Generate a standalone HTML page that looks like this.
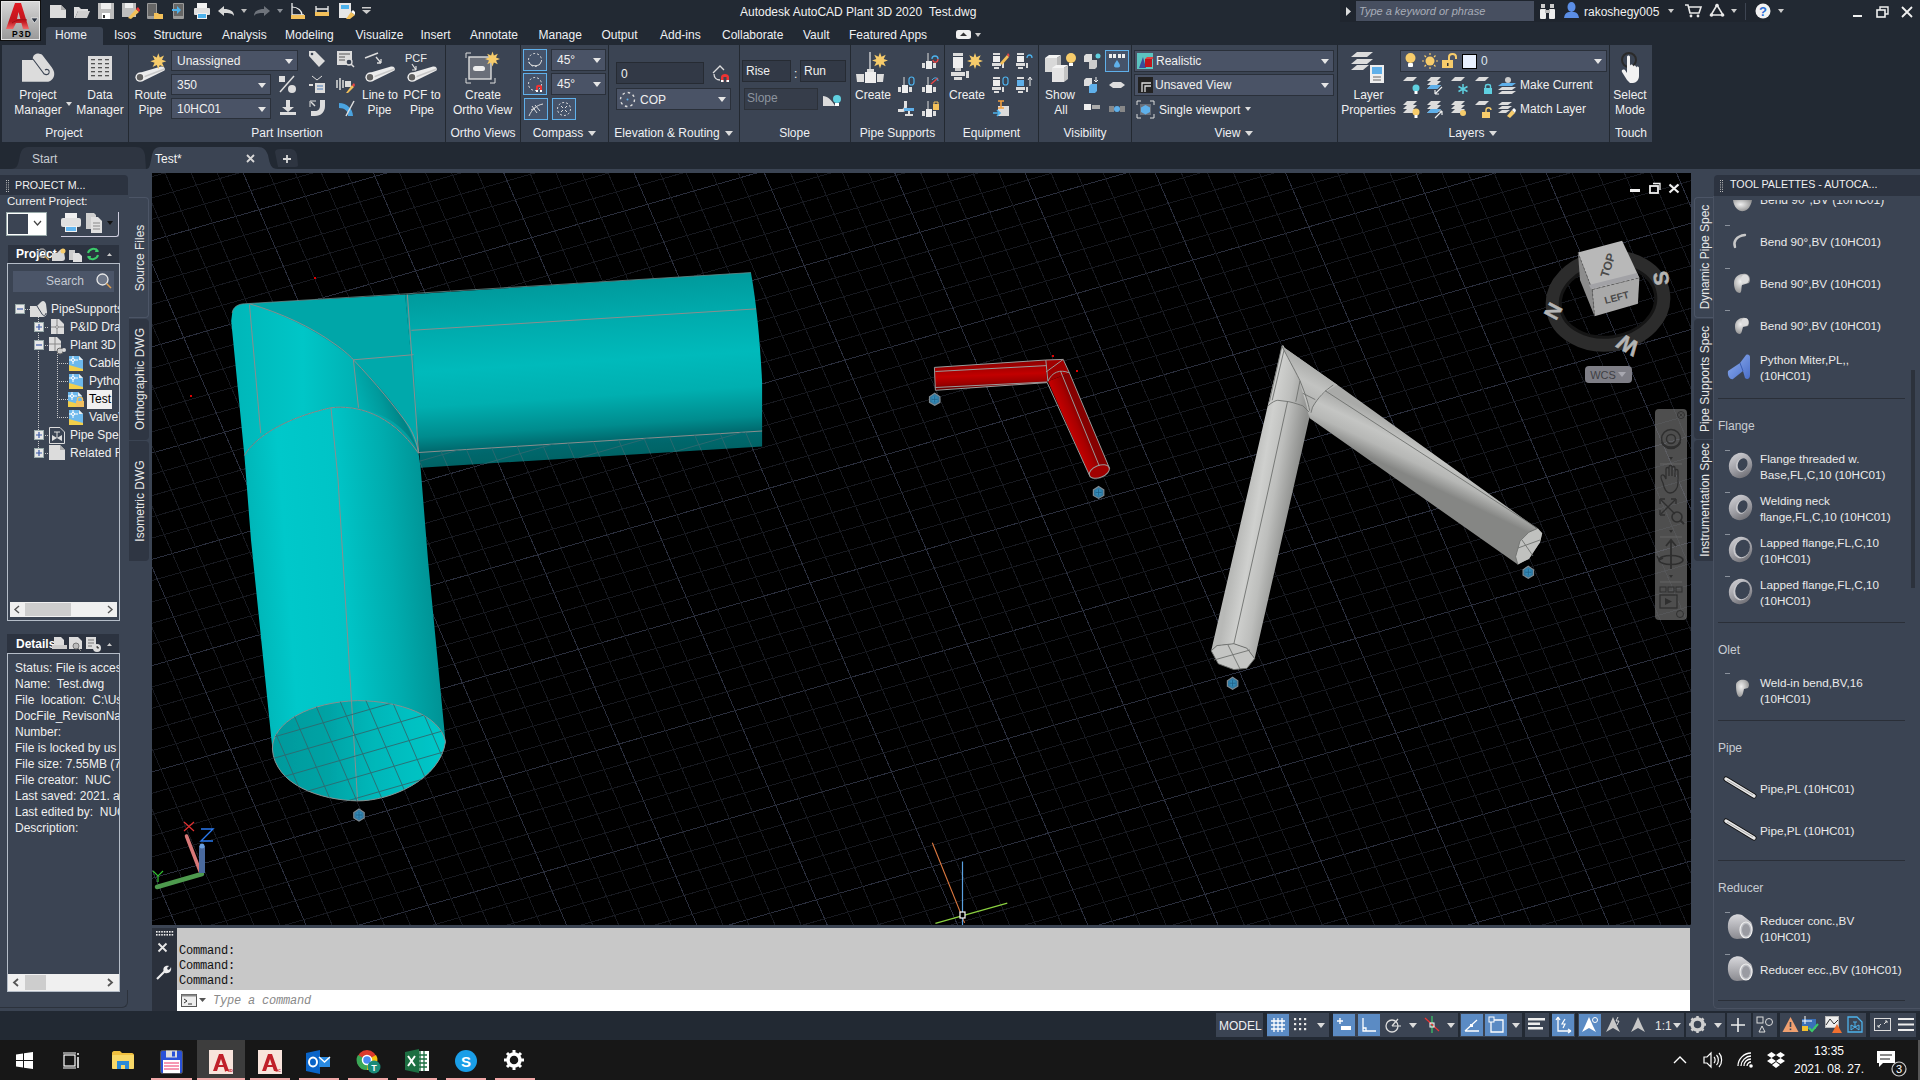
<!DOCTYPE html>
<html><head><meta charset="utf-8">
<style>
*{margin:0;padding:0;box-sizing:border-box}
html,body{width:1920px;height:1080px;overflow:hidden;background:#222933;font-family:"Liberation Sans",sans-serif;font-size:12px;color:#f0f0f0;position:relative}
.a{position:absolute}
.t{position:absolute;white-space:nowrap;line-height:1}
svg{overflow:visible}
</style></head><body>
<div class="a" style="left:0px;top:0px;width:1920px;height:45px;background:#222933;"></div>
<div class="a" style="left:1340px;top:0px;width:430px;height:22px;background:#1f252e;"></div>
<div class="a" style="left:0;top:0;width:41px;height:41px;background:#0e0e0e"></div>
<div class="a" style="left:1px;top:1px;width:39px;height:39px;border:1.5px solid #e6e6e6;background:linear-gradient(180deg,#d6d6d6,#9a9a9a)"></div>
<svg class="a" style="left:5px;top:2px;" width="26" height="28" viewBox="0 0 26 28"><defs><linearGradient id="ag" x1="0" y1="0" x2="0" y2="1"><stop offset="0" stop-color="#e21c24"/><stop offset="0.7" stop-color="#c0141c"/><stop offset="1" stop-color="#f06a6a"/></linearGradient></defs><path d="M1 27 L10 1 L16 1 L24 27 L18 27 L13.5 10 L12 17 L18 17 L17 21 L11 21 L8 27 Z" fill="url(#ag)"/><path d="M7 21 C11 18 17 17 22 18" stroke="#a01018" stroke-width="1" fill="none"/></svg>
<div class="t" style="left:12px;top:30.30px;font-size:8.5px;color:#000;font-weight:bold;font-style:normal;font-family:'Liberation Sans',sans-serif;letter-spacing:1.2px">P3D</div>
<svg class="a" style="left:31px;top:18px;" width="7" height="5" viewBox="0 0 7 5"><path d="M0 0 H7 L3.5 5Z" fill="#2a3340" stroke="#fff" stroke-width="0.6"/></svg>
<svg class="a" style="left:50px;top:5px;" width="16" height="13" viewBox="0 0 16 13"><path d="M0 0 H11 L16 5 V13 H0Z" fill="#dcdcdc"/><path d="M11 0 V5 H16" fill="#aaa"/></svg>
<svg class="a" style="left:74px;top:5px;" width="16" height="13" viewBox="0 0 16 13"><path d="M0 2 H5 L7 4 H14 V6 H4 L1 13 H0Z" fill="#dcdcdc"/><path d="M4 6 H16 L13 13 H1Z" fill="#cfcfcf"/></svg>
<svg class="a" style="left:98px;top:3px;" width="16" height="16" viewBox="0 0 16 16"><rect x="0" y="0" width="16" height="16" fill="#bdbdbd"/><rect x="3" y="0" width="10" height="6" fill="#eee"/><rect x="4" y="10" width="8" height="6" fill="#fff"/><rect x="5" y="12" width="2" height="3" fill="#333"/></svg>
<svg class="a" style="left:122px;top:3px;" width="17" height="16" viewBox="0 0 17 16"><rect x="0" y="0" width="14" height="14" fill="#bdbdbd"/><rect x="3" y="0" width="8" height="5" fill="#eee"/><path d="M6 15 L14 6 L17 9 L9 16 Z" fill="#f3c05a"/><path d="M14 6 L16 4 L18 7 L17 9Z" fill="#e33"/></svg>
<svg class="a" style="left:147px;top:3px;" width="16" height="16" viewBox="0 0 16 16"><rect x="0" y="0" width="10" height="16" rx="1" fill="#9a9a9a"/><rect x="1" y="1" width="8" height="12" fill="#666"/><path d="M7 10 H11 L12 11 H16 V16 H7Z" fill="#f3c05a"/></svg>
<svg class="a" style="left:172px;top:3px;" width="12" height="16" viewBox="0 0 12 16"><rect x="1" y="0" width="11" height="16" rx="1" fill="#9a9a9a"/><rect x="2" y="1" width="9" height="12" fill="#666"/><path d="M0 6 H5 V3 L9 7 L5 11 V8 H0Z" fill="#4db2ec"/></svg>
<svg class="a" style="left:194px;top:3px;" width="16" height="16" viewBox="0 0 16 16"><rect x="3" y="0" width="10" height="5" fill="#f2f2f2"/><rect x="0" y="5" width="16" height="7" rx="1" fill="#e0e0e0"/><rect x="3" y="10" width="10" height="6" fill="#f2f2f2"/><rect x="4" y="11" width="8" height="4" fill="#4db2ec"/></svg>
<svg class="a" style="left:218px;top:6px;" width="16" height="10" viewBox="0 0 16 10"><path d="M0 5 L6 0 V3 C12 3 16 5 16 10 C14 7 11 7 6 7 V10Z" fill="#d8d8d8"/></svg>
<svg class="a" style="left:241px;top:9px;" width="6" height="4" viewBox="0 0 6 4"><path d="M0 0H6L3 4Z" fill="#bbb"/></svg>
<svg class="a" style="left:254px;top:6px;" width="16" height="10" viewBox="0 0 16 10"><path d="M16 5 L10 0 V3 C4 3 0 5 0 10 C2 7 5 7 10 7 V10Z" fill="#6e737b"/></svg>
<svg class="a" style="left:277px;top:9px;" width="6" height="4" viewBox="0 0 6 4"><path d="M0 0H6L3 4Z" fill="#8a8f96"/></svg>
<svg class="a" style="left:291px;top:3px;" width="14" height="16" viewBox="0 0 14 16"><path d="M1 0 V12 H13" stroke="#eee" stroke-width="1.3" fill="none"/><path d="M1 4 C7 4 11 8 11 12" stroke="#eee" stroke-width="1.2" fill="none"/><rect x="0" y="12" width="14" height="4" fill="#f3c05a"/></svg>
<svg class="a" style="left:315px;top:6px;" width="14" height="10" viewBox="0 0 14 10"><path d="M1 3 H13 M1 0 V6 M13 0 V6" stroke="#eee" stroke-width="1.3"/><rect x="0" y="6" width="14" height="4" fill="#f3c05a"/></svg>
<svg class="a" style="left:339px;top:3px;" width="16" height="16" viewBox="0 0 16 16"><rect x="0" y="0" width="12" height="15" fill="#e6e6e6"/><rect x="2" y="2" width="8" height="4" fill="#4db2ec"/><path d="M7 16 L12 9 L16 12 L11 16Z" fill="#f3c05a"/><path d="M12 9 L14 7 L16 9 L16 12Z" fill="#fff"/></svg>
<svg class="a" style="left:362px;top:7px;" width="9" height="7" viewBox="0 0 9 7"><rect x="0" y="0" width="9" height="1.5" fill="#ccc"/><path d="M0 3 H9 L4.5 7Z" fill="#ccc"/></svg>
<div class="t" style="left:740px;top:5.84px;font-size:12px;color:#f2f2f2;font-weight:normal;font-style:normal;font-family:'Liberation Sans',sans-serif;">Autodesk AutoCAD Plant 3D 2020</div>
<div class="t" style="left:929px;top:5.84px;font-size:12px;color:#f2f2f2;font-weight:normal;font-style:normal;font-family:'Liberation Sans',sans-serif;">Test.dwg</div>
<svg class="a" style="left:1346px;top:7px;" width="5" height="9" viewBox="0 0 5 9"><path d="M0 0 L5 4.5 L0 9Z" fill="#ddd"/></svg>
<div class="a" style="left:1356px;top:1px;width:178px;height:20px;background:#474f60;"></div>
<div class="t" style="left:1359px;top:5.69px;font-size:11px;color:#a7adb8;font-weight:normal;font-style:italic;font-family:'Liberation Sans',sans-serif;">Type a keyword or phrase</div>
<svg class="a" style="left:1540px;top:4px;" width="15" height="15" viewBox="0 0 15 15"><rect x="1" y="0" width="4" height="4" fill="#ccc"/><rect x="10" y="0" width="4" height="4" fill="#ccc"/><rect x="0" y="5" width="6" height="10" rx="1" fill="#eee"/><rect x="9" y="5" width="6" height="10" rx="1" fill="#eee"/><rect x="5" y="6" width="5" height="3" fill="#bbb"/></svg>
<svg class="a" style="left:1564px;top:2px;" width="15" height="16" viewBox="0 0 15 16"><ellipse cx="7.5" cy="5" rx="4" ry="5" fill="#5b8ee6"/><path d="M0 16 C1 10 4 10 7.5 10 C11 10 14 10 15 16Z" fill="#5b8ee6"/></svg>
<div class="t" style="left:1584px;top:5.84px;font-size:12px;color:#f0f0f0;font-weight:normal;font-style:normal;font-family:'Liberation Sans',sans-serif;">rakoshegy005</div>
<svg class="a" style="left:1668px;top:9px;" width="6" height="4" viewBox="0 0 6 4"><path d="M0 0H6L3 4Z" fill="#ccc"/></svg>
<svg class="a" style="left:1685px;top:4px;" width="16" height="13" viewBox="0 0 16 13"><path d="M0 1 H3 L5 9 H14 L16 3 H4" stroke="#e8e8e8" stroke-width="1.6" fill="none"/><circle cx="6" cy="12" r="1.4" fill="#e8e8e8"/><circle cx="13" cy="12" r="1.4" fill="#e8e8e8"/></svg>
<svg class="a" style="left:1709px;top:3px;" width="16" height="14" viewBox="0 0 16 14"><path d="M8 2 L2 12 H14Z" stroke="#e8e8e8" stroke-width="1.6" fill="none"/><circle cx="8" cy="2.5" r="1.8" fill="#e8e8e8"/><circle cx="2.5" cy="12" r="1.8" fill="#e8e8e8"/><circle cx="13.5" cy="12" r="1.8" fill="#e8e8e8"/></svg>
<svg class="a" style="left:1731px;top:9px;" width="6" height="4" viewBox="0 0 6 4"><path d="M0 0H6L3 4Z" fill="#ccc"/></svg>
<div class="a" style="left:1745px;top:3px;width:1px;height:17px;background:#3e4552;"></div>
<svg class="a" style="left:1755px;top:3px;" width="16" height="16" viewBox="0 0 16 16"><circle cx="8" cy="8" r="7.5" fill="#f2f2f2"/><text x="8" y="13" font-family="Liberation Sans" font-weight="bold" font-size="13" text-anchor="middle" fill="#2d6fd6">?</text></svg>
<svg class="a" style="left:1778px;top:9px;" width="6" height="4" viewBox="0 0 6 4"><path d="M0 0H6L3 4Z" fill="#ccc"/></svg>
<div class="a" style="left:1853px;top:15px;width:9px;height:2px;background:#f0f0f0;"></div>
<svg class="a" style="left:1876px;top:6px;" width="13" height="12" viewBox="0 0 13 12"><rect x="1" y="4" width="8" height="7" fill="none" stroke="#f0f0f0" stroke-width="1.6"/><path d="M4 4 V1 H12 V8 H9" fill="none" stroke="#f0f0f0" stroke-width="1.4"/></svg>
<svg class="a" style="left:1901px;top:6px;" width="12" height="12" viewBox="0 0 12 12"><path d="M1 1 L11 11 M11 1 L1 11" stroke="#f0f0f0" stroke-width="1.8"/></svg>
<div class="a" style="left:46px;top:27px;width:57px;height:18px;background:#3b4453;border-radius:3px 3px 0 0"></div>
<div class="t" style="left:55px;top:28.84px;font-size:12px;color:#eef0f3;font-weight:normal;font-style:normal;font-family:'Liberation Sans',sans-serif;">Home</div>
<div class="t" style="left:114px;top:28.84px;font-size:12px;color:#eef0f3;font-weight:normal;font-style:normal;font-family:'Liberation Sans',sans-serif;">Isos</div>
<div class="t" style="left:153.5px;top:28.84px;font-size:12px;color:#eef0f3;font-weight:normal;font-style:normal;font-family:'Liberation Sans',sans-serif;">Structure</div>
<div class="t" style="left:222px;top:28.84px;font-size:12px;color:#eef0f3;font-weight:normal;font-style:normal;font-family:'Liberation Sans',sans-serif;">Analysis</div>
<div class="t" style="left:285px;top:28.84px;font-size:12px;color:#eef0f3;font-weight:normal;font-style:normal;font-family:'Liberation Sans',sans-serif;">Modeling</div>
<div class="t" style="left:355.5px;top:28.84px;font-size:12px;color:#eef0f3;font-weight:normal;font-style:normal;font-family:'Liberation Sans',sans-serif;">Visualize</div>
<div class="t" style="left:420.5px;top:28.84px;font-size:12px;color:#eef0f3;font-weight:normal;font-style:normal;font-family:'Liberation Sans',sans-serif;">Insert</div>
<div class="t" style="left:470px;top:28.84px;font-size:12px;color:#eef0f3;font-weight:normal;font-style:normal;font-family:'Liberation Sans',sans-serif;">Annotate</div>
<div class="t" style="left:538.5px;top:28.84px;font-size:12px;color:#eef0f3;font-weight:normal;font-style:normal;font-family:'Liberation Sans',sans-serif;">Manage</div>
<div class="t" style="left:601.5px;top:28.84px;font-size:12px;color:#eef0f3;font-weight:normal;font-style:normal;font-family:'Liberation Sans',sans-serif;">Output</div>
<div class="t" style="left:660px;top:28.84px;font-size:12px;color:#eef0f3;font-weight:normal;font-style:normal;font-family:'Liberation Sans',sans-serif;">Add-ins</div>
<div class="t" style="left:722px;top:28.84px;font-size:12px;color:#eef0f3;font-weight:normal;font-style:normal;font-family:'Liberation Sans',sans-serif;">Collaborate</div>
<div class="t" style="left:803px;top:28.84px;font-size:12px;color:#eef0f3;font-weight:normal;font-style:normal;font-family:'Liberation Sans',sans-serif;">Vault</div>
<div class="t" style="left:849px;top:28.84px;font-size:12px;color:#eef0f3;font-weight:normal;font-style:normal;font-family:'Liberation Sans',sans-serif;">Featured Apps</div>
<svg class="a" style="left:956px;top:30px;" width="15" height="9" viewBox="0 0 15 9"><rect x="0" y="0" width="15" height="9" rx="2.5" fill="#f0f0f0"/><path d="M4 6 L7.5 2.5 L11 6Z" fill="#333"/></svg>
<svg class="a" style="left:975px;top:33px;" width="6" height="4" viewBox="0 0 6 4"><path d="M0 0H6L3 4Z" fill="#ccc"/></svg>
<div class="a" style="left:2px;top:45px;width:1650px;height:97px;background:#3b4453;"></div>
<div class="a" style="left:128px;top:45px;width:1px;height:97px;background:#232931;"></div>
<div class="a" style="left:445px;top:45px;width:1px;height:97px;background:#232931;"></div>
<div class="a" style="left:520px;top:45px;width:1px;height:97px;background:#232931;"></div>
<div class="a" style="left:608px;top:45px;width:1px;height:97px;background:#232931;"></div>
<div class="a" style="left:739px;top:45px;width:1px;height:97px;background:#232931;"></div>
<div class="a" style="left:850px;top:45px;width:1px;height:97px;background:#232931;"></div>
<div class="a" style="left:944px;top:45px;width:1px;height:97px;background:#232931;"></div>
<div class="a" style="left:1038px;top:45px;width:1px;height:97px;background:#232931;"></div>
<div class="a" style="left:1131px;top:45px;width:1px;height:97px;background:#232931;"></div>
<div class="a" style="left:1337px;top:45px;width:1px;height:97px;background:#232931;"></div>
<div class="a" style="left:1609px;top:45px;width:1px;height:97px;background:#232931;"></div>
<div class="t" style="left:-86px;width:300px;text-align:center;top:126.84px;font-size:12px;color:#eef0f3;font-weight:normal;">Project</div>
<div class="t" style="left:137px;width:300px;text-align:center;top:126.84px;font-size:12px;color:#eef0f3;font-weight:normal;">Part Insertion</div>
<div class="t" style="left:333px;width:300px;text-align:center;top:126.84px;font-size:12px;color:#eef0f3;font-weight:normal;">Ortho Views</div>
<div class="t" style="left:408px;width:300px;text-align:center;top:126.84px;font-size:12px;color:#eef0f3;font-weight:normal;">Compass</div>
<div class="t" style="left:517px;width:300px;text-align:center;top:126.84px;font-size:12px;color:#eef0f3;font-weight:normal;">Elevation &amp; Routing</div>
<div class="t" style="left:644.5px;width:300px;text-align:center;top:126.84px;font-size:12px;color:#eef0f3;font-weight:normal;">Slope</div>
<div class="t" style="left:747.5px;width:300px;text-align:center;top:126.84px;font-size:12px;color:#eef0f3;font-weight:normal;">Pipe Supports</div>
<div class="t" style="left:841.5px;width:300px;text-align:center;top:126.84px;font-size:12px;color:#eef0f3;font-weight:normal;">Equipment</div>
<div class="t" style="left:935px;width:300px;text-align:center;top:126.84px;font-size:12px;color:#eef0f3;font-weight:normal;">Visibility</div>
<div class="t" style="left:1077.5px;width:300px;text-align:center;top:126.84px;font-size:12px;color:#eef0f3;font-weight:normal;">View</div>
<div class="t" style="left:1316.5px;width:300px;text-align:center;top:126.84px;font-size:12px;color:#eef0f3;font-weight:normal;">Layers</div>
<div class="t" style="left:1481px;width:300px;text-align:center;top:126.84px;font-size:12px;color:#eef0f3;font-weight:normal;">Touch</div>
<svg class="a" style="left:588px;top:131px;" width="8" height="5" viewBox="0 0 8 5"><path d="M0 0H8L4 5Z" fill="#dcdcdc"/></svg>
<svg class="a" style="left:725px;top:131px;" width="8" height="5" viewBox="0 0 8 5"><path d="M0 0H8L4 5Z" fill="#dcdcdc"/></svg>
<svg class="a" style="left:1245px;top:131px;" width="8" height="5" viewBox="0 0 8 5"><path d="M0 0H8L4 5Z" fill="#dcdcdc"/></svg>
<svg class="a" style="left:1489px;top:131px;" width="8" height="5" viewBox="0 0 8 5"><path d="M0 0H8L4 5Z" fill="#dcdcdc"/></svg>
<svg class="a" style="left:22px;top:53px;" width="34" height="30" viewBox="0 0 34 30"><path d="M0 7.1 H10.9 L10.9 4.2 C12 1 15 0 17.2 0.8 C19 1 20 1.5 20.5 2.2 L29.7 14.2 C31.5 17 32.5 19 32.2 21.7 C32 25 29 28.75 24.7 28.75 H0 Z" fill="#dcdcdc"/><path d="M10.9 6 L21 19.5 C22 22 26 22.5 27 20 C28 17 25 15.5 23 17" stroke="#3b4453" stroke-width="1.1" fill="none"/></svg>
<div class="t" style="left:-112px;width:300px;text-align:center;top:88.84px;font-size:12px;color:#f0f0f0;font-weight:normal;">Project</div>
<div class="t" style="left:-112px;width:300px;text-align:center;top:103.84px;font-size:12px;color:#f0f0f0;font-weight:normal;">Manager</div>
<svg class="a" style="left:66px;top:102px;" width="6" height="4" viewBox="0 0 6 4"><path d="M0 0H6L3 4Z" fill="#ddd"/></svg>
<svg class="a" style="left:88px;top:56px;" width="24" height="24" viewBox="0 0 24 24"><rect x="0" y="0" width="24" height="24" fill="#dcdcdc"/><rect x="3" y="3" width="4" height="1.3" fill="#555"/><rect x="3" y="7" width="4" height="1.3" fill="#555"/><rect x="3" y="11" width="4" height="1.3" fill="#555"/><rect x="3" y="15" width="4" height="1.3" fill="#555"/><rect x="3" y="19" width="4" height="1.3" fill="#555"/><rect x="10" y="3" width="4" height="1.3" fill="#555"/><rect x="10" y="7" width="4" height="1.3" fill="#555"/><rect x="10" y="11" width="4" height="1.3" fill="#555"/><rect x="10" y="15" width="4" height="1.3" fill="#555"/><rect x="10" y="19" width="4" height="1.3" fill="#555"/><rect x="17" y="3" width="4" height="1.3" fill="#555"/><rect x="17" y="7" width="4" height="1.3" fill="#555"/><rect x="17" y="11" width="4" height="1.3" fill="#555"/><rect x="17" y="15" width="4" height="1.3" fill="#555"/><rect x="17" y="19" width="4" height="1.3" fill="#555"/></svg>
<div class="t" style="left:-50px;width:300px;text-align:center;top:88.84px;font-size:12px;color:#f0f0f0;font-weight:normal;">Data</div>
<div class="t" style="left:-50px;width:300px;text-align:center;top:103.84px;font-size:12px;color:#f0f0f0;font-weight:normal;">Manager</div>
<svg class="a" style="left:135px;top:53px;" width="32" height="30" viewBox="0 0 32 30"><path d="M4 20 L26 13.5 C29 13 30.5 15 29.5 17.5 L7 28.5 Z" fill="#ececec"/><path d="M6 25 L29.5 16" stroke="#c8c8c8" stroke-width="1.5"/><circle cx="5" cy="24.2" r="4.6" fill="#f2f2f2"/><circle cx="5" cy="24.2" r="3.2" fill="#606060"/><path d="M23.3 0.3 L24.8 4.6 L29.0 2.6 L27.0 6.8 L31.3 8.3 L27.0 9.8 L29.0 14.0 L24.8 12.0 L23.3 16.3 L21.8 12.0 L17.6 14.0 L19.6 9.8 L15.3 8.3 L19.6 6.8 L17.6 2.6 L21.8 4.6Z" fill="#f7cc6b"/></svg>
<div class="t" style="left:0.5px;width:300px;text-align:center;top:88.84px;font-size:12px;color:#f0f0f0;font-weight:normal;">Route</div>
<div class="t" style="left:0.5px;width:300px;text-align:center;top:103.84px;font-size:12px;color:#f0f0f0;font-weight:normal;">Pipe</div>
<div class="a" style="left:171px;top:50px;width:127px;height:21px;background:#4a5366;border:1px solid #2a303a"></div>
<div class="t" style="left:177px;top:54.84px;font-size:12px;color:#f0f0f0;font-weight:normal;font-style:normal;font-family:'Liberation Sans',sans-serif;">Unassigned</div>
<svg class="a" style="left:285px;top:58.5px;" width="8" height="5" viewBox="0 0 8 5"><path d="M0 0H8L4 5Z" fill="#e6e6e6"/></svg>
<div class="a" style="left:171px;top:74px;width:100px;height:21px;background:#4a5366;border:1px solid #2a303a"></div>
<div class="t" style="left:177px;top:78.84px;font-size:12px;color:#f0f0f0;font-weight:normal;font-style:normal;font-family:'Liberation Sans',sans-serif;">350</div>
<svg class="a" style="left:258px;top:82.5px;" width="8" height="5" viewBox="0 0 8 5"><path d="M0 0H8L4 5Z" fill="#e6e6e6"/></svg>
<div class="a" style="left:171px;top:98px;width:100px;height:21px;background:#4a5366;border:1px solid #2a303a"></div>
<div class="t" style="left:177px;top:102.84px;font-size:12px;color:#f0f0f0;font-weight:normal;font-style:normal;font-family:'Liberation Sans',sans-serif;">10HC01</div>
<svg class="a" style="left:258px;top:106.5px;" width="8" height="5" viewBox="0 0 8 5"><path d="M0 0H8L4 5Z" fill="#e6e6e6"/></svg>
<svg class="a" style="left:279px;top:76px;" width="17" height="17" viewBox="0 0 17 17"><rect x="0" y="0" width="6" height="6" fill="#ddd"/><path d="M15 0 L1 16" stroke="#ddd" stroke-width="1.5"/><circle cx="13" cy="13" r="4" fill="#ddd"/></svg>
<svg class="a" style="left:280px;top:100px;" width="16" height="15" viewBox="0 0 16 15"><path d="M6 0 H10 V7 H14 L8 12 L2 7 H6Z" fill="#ddd"/><rect x="0" y="12" width="16" height="3" fill="#ddd"/></svg>
<svg class="a" style="left:309px;top:51px;" width="16" height="16" viewBox="0 0 16 16"><path d="M0 5 V0 H6 L16 10 L10 16Z" fill="#dcdcdc"/><circle cx="3" cy="3" r="1.3" fill="#3b4453"/></svg>
<svg class="a" style="left:309px;top:76px;" width="16" height="17" viewBox="0 0 16 17"><path d="M3 0 L8 4 L13 0" stroke="#ddd" fill="none"/><rect x="6" y="7" width="10" height="10" fill="#dcdcdc"/><path d="M8 10 H14 M8 13 H14" stroke="#4a7ab8"/><path d="M0 9 L4 9" stroke="#ddd" stroke-width="2"/></svg>
<svg class="a" style="left:309px;top:100px;" width="16" height="16" viewBox="0 0 16 16"><path d="M2 2 L6 6" stroke="#ddd" stroke-width="1.4"/><path d="M1 7 V1 H7" stroke="#ddd" fill="none"/><path d="M16 0 V6 C16 12 12 16 6 16 H2 V11 H6 C9 11 11 9 11 6 V0Z" fill="#dcdcdc"/></svg>
<svg class="a" style="left:337px;top:51px;" width="17" height="17" viewBox="0 0 17 17"><rect x="0" y="0" width="15" height="14" fill="#dcdcdc"/><path d="M2 3H13M2 6H8M2 9H8" stroke="#555"/><circle cx="12" cy="11" r="3" fill="#3b4453" stroke="#ddd" stroke-width="1.3"/><path d="M14 13 L17 16" stroke="#ddd" stroke-width="1.5"/></svg>
<svg class="a" style="left:337px;top:76px;" width="17" height="17" viewBox="0 0 17 17"><path d="M0 4 V12 M3 2 V14 M6 4 V12" stroke="#ddd" stroke-width="1.5"/><rect x="8" y="5" width="6" height="6" fill="#ddd"/><path d="M9 17 L15 9 L17 11 L11 17Z" fill="#f3c05a"/><path d="M15 9 L17 7 L18 9 L17 11Z" fill="#e44"/></svg>
<svg class="a" style="left:339px;top:101px;" width="16" height="15" viewBox="0 0 16 15"><path d="M0 2 C8 2 14 8 14 15 H9 C9 10 6 7 0 7Z" fill="#4aa3df"/><path d="M7 15 L15 0" stroke="#ddd" stroke-width="1.5"/></svg>
<svg class="a" style="left:365px;top:53px;" width="30" height="30" viewBox="0 0 30 30"><path d="M0 5 L13 0" stroke="#ddd" stroke-width="1.5"/><path d="M11 4 L16 10 M16 10 L16 6 M16 10 L12 10" stroke="#ddd" stroke-width="1.3" fill="none"/><path d="M4 20 L26 13.5 C29 13 30.5 15 29.5 17.5 L7 28.5 Z" fill="#ececec"/><path d="M6 25 L29.5 16" stroke="#c8c8c8" stroke-width="1.5"/><circle cx="5" cy="24.2" r="4.6" fill="#f2f2f2"/><circle cx="5" cy="24.2" r="3.2" fill="#606060"/></svg>
<div class="t" style="left:230px;width:300px;text-align:center;top:88.84px;font-size:12px;color:#f0f0f0;font-weight:normal;">Line to</div>
<div class="t" style="left:229.5px;width:300px;text-align:center;top:103.84px;font-size:12px;color:#f0f0f0;font-weight:normal;">Pipe</div>
<svg class="a" style="left:405px;top:53px;" width="34" height="30" viewBox="0 0 34 30"><text x="0" y="9" font-family="Liberation Sans" font-size="11" fill="#eee">PCF</text><path d="M7 11 L11 17 M11 17 V13 M11 17 H7" stroke="#ddd" stroke-width="1.2" fill="none"/><g transform="translate(2 0)"><path d="M4 20 L26 13.5 C29 13 30.5 15 29.5 17.5 L7 28.5 Z" fill="#ececec"/><path d="M6 25 L29.5 16" stroke="#c8c8c8" stroke-width="1.5"/><circle cx="5" cy="24.2" r="4.6" fill="#f2f2f2"/><circle cx="5" cy="24.2" r="3.2" fill="#606060"/></g></svg>
<div class="t" style="left:272px;width:300px;text-align:center;top:88.84px;font-size:12px;color:#f0f0f0;font-weight:normal;">PCF to</div>
<div class="t" style="left:272px;width:300px;text-align:center;top:103.84px;font-size:12px;color:#f0f0f0;font-weight:normal;">Pipe</div>
<svg class="a" style="left:465px;top:52px;" width="35" height="32" viewBox="0 0 35 32"><path d="M1 6 V1 H6 M1 26 V31 H6 M25 31 H30 V26" stroke="#ddd" fill="none"/><rect x="4" y="5" width="22" height="22" fill="#6a6f79" stroke="#ddd" stroke-width="1.4"/><rect x="8" y="14" width="12" height="5" rx="2.5" fill="#eee"/><path d="M27.5 -0.5 L28.9 3.5 L32.8 1.7 L31.0 5.6 L35.0 7.0 L31.0 8.4 L32.8 12.3 L28.9 10.5 L27.5 14.5 L26.1 10.5 L22.2 12.3 L24.0 8.4 L20.0 7.0 L24.0 5.6 L22.2 1.7 L26.1 3.5Z" fill="#f7cc6b"/></svg>
<div class="t" style="left:333px;width:300px;text-align:center;top:88.84px;font-size:12px;color:#f0f0f0;font-weight:normal;">Create</div>
<div class="t" style="left:332.5px;width:300px;text-align:center;top:103.84px;font-size:12px;color:#f0f0f0;font-weight:normal;">Ortho View</div>
<div class="a" style="left:523px;top:49px;width:24px;height:22px;background:#45536a;border:1px solid #5fb0ea"></div>
<svg class="a" style="left:526px;top:52px;" width="18" height="16" viewBox="0 0 18 16"><circle cx="9" cy="8" r="6.5" stroke="#ddd" stroke-dasharray="2 2" fill="none"/><path d="M3 10 C4 15 14 15 15 10" stroke="#ddd" fill="none"/></svg>
<div class="a" style="left:523px;top:73px;width:24px;height:22px;background:#45536a;border:1px solid #5fb0ea"></div>
<svg class="a" style="left:526px;top:76px;" width="18" height="16" viewBox="0 0 18 16"><circle cx="9" cy="8" r="6.5" stroke="#ddd" stroke-dasharray="2 2" fill="none"/><path d="M10 16 V11 C10 8 16 8 16 11 V16 H14 V11 H12 V16Z" fill="#e33"/><rect x="10" y="14" width="2" height="2" fill="#fff"/><rect x="14" y="14" width="2" height="2" fill="#fff"/></svg>
<div class="a" style="left:524px;top:98px;width:24px;height:22px;background:#45536a;border:1px solid #5fb0ea"></div>
<svg class="a" style="left:527px;top:101px;" width="18" height="16" viewBox="0 0 18 16"><path d="M2 15 C5 8 10 4 16 3 M5 5 L10 12 M8 4 L13 10 M4 9 L8 7" stroke="#ddd" fill="none"/></svg>
<div class="a" style="left:552px;top:98px;width:24px;height:22px;background:#45536a;border:1px solid #5fb0ea"></div>
<svg class="a" style="left:555px;top:101px;" width="18" height="16" viewBox="0 0 18 16"><circle cx="9" cy="8" r="6.5" stroke="#ddd" stroke-dasharray="2 2" fill="none"/><path d="M6 5 L8 7 M12 5 L10 7 M6 11 L8 9 M12 11 L10 9" stroke="#ddd"/></svg>
<div class="a" style="left:551px;top:49px;width:55px;height:22px;background:#4a5366;border:1px solid #2a303a"></div>
<div class="t" style="left:557px;top:54.34px;font-size:12px;color:#f0f0f0;font-weight:normal;font-style:normal;font-family:'Liberation Sans',sans-serif;">45°</div>
<svg class="a" style="left:593px;top:58.0px;" width="8" height="5" viewBox="0 0 8 5"><path d="M0 0H8L4 5Z" fill="#e6e6e6"/></svg>
<div class="a" style="left:551px;top:73px;width:55px;height:22px;background:#4a5366;border:1px solid #2a303a"></div>
<div class="t" style="left:557px;top:78.34px;font-size:12px;color:#f0f0f0;font-weight:normal;font-style:normal;font-family:'Liberation Sans',sans-serif;">45°</div>
<svg class="a" style="left:593px;top:82.0px;" width="8" height="5" viewBox="0 0 8 5"><path d="M0 0H8L4 5Z" fill="#e6e6e6"/></svg>
<div class="a" style="left:616px;top:62px;width:88px;height:22px;background:#323946;border:1px solid #262b33"></div>
<div class="t" style="left:621px;top:67.84px;font-size:12px;color:#f0f0f0;font-weight:normal;font-style:normal;font-family:'Liberation Sans',sans-serif;">0</div>
<svg class="a" style="left:712px;top:65px;" width="18" height="17" viewBox="0 0 18 17"><path d="M1 8 L8 1 L12 5" stroke="#ddd" stroke-width="1.3" fill="none"/><path d="M2 9 C2 13 5 15 8 15" stroke="#ddd" stroke-width="1.3" fill="none"/><path d="M9 17 V12 C9 8 17 8 17 12 V17 H14.5 V12 H11.5 V17Z" fill="#e33"/><rect x="9" y="15" width="2.5" height="2" fill="#fff"/><rect x="14.5" y="15" width="2.5" height="2" fill="#fff"/></svg>
<div class="a" style="left:616px;top:88px;width:115px;height:22px;background:#4a5366;border:1px solid #2a303a"></div>
<svg class="a" style="left:718px;top:97.0px;" width="8" height="5" viewBox="0 0 8 5"><path d="M0 0H8L4 5Z" fill="#e6e6e6"/></svg>
<svg class="a" style="left:619px;top:91px;" width="17" height="17" viewBox="0 0 17 17"><circle cx="8.5" cy="8.5" r="7" stroke="#ddd" stroke-width="1.4" stroke-dasharray="2.5 3" fill="none"/><circle cx="8.5" cy="8.5" r="1" fill="#5fb0ea"/></svg>
<div class="t" style="left:640px;top:93.84px;font-size:12px;color:#f0f0f0;font-weight:normal;font-style:normal;font-family:'Liberation Sans',sans-serif;">COP</div>
<div class="a" style="left:742px;top:60px;width:49px;height:22px;background:#323946;border:1px solid #262b33"></div>
<div class="t" style="left:746px;top:64.84px;font-size:12px;color:#f0f0f0;font-weight:normal;font-style:normal;font-family:'Liberation Sans',sans-serif;">Rise</div>
<div class="t" style="left:794px;top:67.84px;font-size:12px;color:#f0f0f0;font-weight:normal;font-style:normal;font-family:'Liberation Sans',sans-serif;">:</div>
<div class="a" style="left:800px;top:60px;width:46px;height:22px;background:#323946;border:1px solid #262b33"></div>
<div class="t" style="left:804px;top:64.84px;font-size:12px;color:#f0f0f0;font-weight:normal;font-style:normal;font-family:'Liberation Sans',sans-serif;">Run</div>
<div class="a" style="left:744px;top:88px;width:74px;height:22px;background:#363d4a;border:1px solid #2c3139"></div>
<div class="t" style="left:747px;top:91.84px;font-size:12px;color:#8c939e;font-weight:normal;font-style:normal;font-family:'Liberation Sans',sans-serif;">Slope</div>
<svg class="a" style="left:823px;top:94px;" width="18" height="13" viewBox="0 0 18 13"><path d="M0 2 C4 2 9 6 12 12 H0Z" fill="#dcdcdc"/><circle cx="14" cy="5" r="4" fill="#5fd0e0"/><rect x="12" y="9" width="4" height="3" fill="#fff"/></svg>
<svg class="a" style="left:856px;top:52px;" width="32" height="31" viewBox="0 0 32 31"><path d="M14 0 V17" stroke="#ddd" stroke-width="1.3"/><path d="M24.0 0.5 L25.5 4.8 L29.7 2.8 L27.7 7.0 L32.0 8.5 L27.7 10.0 L29.7 14.2 L25.5 12.2 L24.0 16.5 L22.5 12.2 L18.3 14.2 L20.3 10.0 L16.0 8.5 L20.3 7.0 L18.3 2.8 L22.5 4.8Z" fill="#f7cc6b"/><rect x="11" y="17" width="7" height="3" fill="#ddd"/><rect x="9" y="20" width="11" height="11" fill="#eee"/><path d="M0 22 H8 V30 H1Z" fill="#ddd"/><path d="M21 22 H28 L27 30 H21Z" fill="#ddd"/></svg>
<div class="t" style="left:723px;width:300px;text-align:center;top:88.84px;font-size:12px;color:#f0f0f0;font-weight:normal;">Create</div>
<svg class="a" style="left:922px;top:53px;" width="17" height="17" viewBox="0 0 17 17"><path d="M6 0 V8" stroke="#ddd"/><rect x="4" y="8" width="6" height="8" fill="#eee"/><rect x="0" y="10" width="3" height="5" fill="#ddd"/><rect x="11" y="10" width="3" height="5" fill="#ddd"/><path d="M10 6 C10 2 16 2 16 6" stroke="#4db2ec" stroke-width="1.3" fill="none"/><path d="M16 6 C16 10 11 10 11 7" stroke="#e44" stroke-width="1.3" fill="none"/></svg>
<svg class="a" style="left:898px;top:77px;" width="17" height="17" viewBox="0 0 17 17"><path d="M6 0 V8" stroke="#ddd"/><rect x="4" y="8" width="6" height="8" fill="#eee"/><rect x="0" y="10" width="3" height="5" fill="#ddd"/><rect x="11" y="10" width="3" height="5" fill="#ddd"/><rect x="11" y="0" width="5" height="8" rx="2.5" stroke="#4db2ec" stroke-width="1.2" fill="none"/></svg>
<svg class="a" style="left:922px;top:77px;" width="17" height="17" viewBox="0 0 17 17"><path d="M6 0 V8" stroke="#ddd"/><rect x="4" y="8" width="6" height="8" fill="#eee"/><rect x="0" y="10" width="3" height="5" fill="#ddd"/><rect x="11" y="10" width="3" height="5" fill="#ddd"/><path d="M9 7 L16 1" stroke="#e44" stroke-width="1.3"/><path d="M10 3 C12 0 16 0 16 4" stroke="#4db2ec" fill="none"/></svg>
<svg class="a" style="left:898px;top:101px;" width="16" height="15" viewBox="0 0 16 15"><path d="M0 8 H4 C6 8 6 6 6 4 V0 H9 V5 C9 9 7 11 4 11 H0Z" fill="#e0e0e0"/><rect x="6" y="7" width="10" height="3" fill="#5fb0ea"/><rect x="10" y="10" width="2" height="3" fill="#ddd"/><rect x="7" y="13" width="8" height="2" fill="#ddd"/></svg>
<svg class="a" style="left:922px;top:101px;" width="17" height="17" viewBox="0 0 17 17"><path d="M6 0 V8" stroke="#ddd"/><rect x="4" y="8" width="6" height="8" fill="#eee"/><rect x="0" y="10" width="3" height="5" fill="#ddd"/><rect x="11" y="10" width="3" height="5" fill="#ddd"/><rect x="11" y="3" width="6" height="6" fill="#f3c05a"/><path d="M12 3 V1 H16 V3" stroke="#f3c05a" fill="none"/></svg>
<svg class="a" style="left:951px;top:53px;" width="32" height="30" viewBox="0 0 32 30"><rect x="2" y="0" width="10" height="3" fill="#ddd"/><rect x="2" y="4" width="10" height="11" fill="#eee"/><rect x="4" y="15" width="6" height="3" fill="#ccc"/><rect x="0" y="19" width="14" height="4" fill="#ddd"/><rect x="3" y="24" width="8" height="3" fill="#ddd"/><rect x="15" y="18" width="3" height="7" fill="#ddd"/><path d="M24.0 0.0 L25.5 4.3 L29.7 2.3 L27.7 6.5 L32.0 8.0 L27.7 9.5 L29.7 13.7 L25.5 11.7 L24.0 16.0 L22.5 11.7 L18.3 13.7 L20.3 9.5 L16.0 8.0 L20.3 6.5 L18.3 2.3 L22.5 4.3Z" fill="#f7cc6b"/></svg>
<div class="t" style="left:817px;width:300px;text-align:center;top:88.84px;font-size:12px;color:#f0f0f0;font-weight:normal;">Create</div>
<svg class="a" style="left:992px;top:53px;" width="17" height="17" viewBox="0 0 17 17"><rect x="1" y="0" width="7" height="2" fill="#ddd"/><rect x="1" y="3" width="7" height="6" fill="#eee"/><rect x="0" y="10" width="9" height="3" fill="#ddd"/><rect x="2" y="14" width="5" height="2" fill="#ddd"/><rect x="10" y="10" width="2" height="5" fill="#ddd"/><path d="M8 10 L15 2 L17 4 L10 12Z" fill="#f3c05a"/><path d="M15 2 L16 0 L17.5 2 L17 4Z" fill="#e44"/></svg>
<svg class="a" style="left:1016px;top:53px;" width="17" height="17" viewBox="0 0 17 17"><rect x="1" y="0" width="7" height="2" fill="#ddd"/><rect x="1" y="3" width="7" height="6" fill="#eee"/><rect x="0" y="10" width="9" height="3" fill="#ddd"/><rect x="2" y="14" width="5" height="2" fill="#ddd"/><rect x="10" y="10" width="2" height="5" fill="#ddd"/><path d="M11 5 C11 1 16 1 16 5" stroke="#4db2ec" stroke-width="1.3" fill="none"/></svg>
<svg class="a" style="left:992px;top:77px;" width="17" height="17" viewBox="0 0 17 17"><rect x="1" y="0" width="7" height="2" fill="#ddd"/><rect x="1" y="3" width="7" height="6" fill="#eee"/><rect x="0" y="10" width="9" height="3" fill="#ddd"/><rect x="2" y="14" width="5" height="2" fill="#ddd"/><rect x="10" y="10" width="2" height="5" fill="#ddd"/><rect x="11" y="0" width="5" height="8" rx="2.5" stroke="#4db2ec" stroke-width="1.2" fill="none"/></svg>
<svg class="a" style="left:1016px;top:77px;" width="17" height="17" viewBox="0 0 17 17"><rect x="1" y="0" width="7" height="2" fill="#ddd"/><rect x="1" y="3" width="7" height="6" fill="#eee"/><rect x="0" y="10" width="9" height="3" fill="#ddd"/><rect x="2" y="14" width="5" height="2" fill="#ddd"/><rect x="10" y="10" width="2" height="5" fill="#ddd"/><path d="M14 9 V1 M12 3 L14 0 L16 3" stroke="#eee" fill="none"/><rect x="1" y="3" width="7" height="6" fill="#5fb0ea"/></svg>
<svg class="a" style="left:993px;top:101px;" width="16" height="16" viewBox="0 0 16 16"><rect x="5" y="5" width="11" height="10" fill="#dcdcdc"/><path d="M5 0 H11 M8 0 V7 M5 7 H11" stroke="#f3a040" stroke-width="1.6"/><path d="M0 12 H7 M4 9 L7 12 L4 15" stroke="#4db2ec" stroke-width="1.6" fill="none"/></svg>
<svg class="a" style="left:1044px;top:52px;" width="32" height="32" viewBox="0 0 32 32"><path d="M1 6 L5 3 H17 L13 6Z" fill="#f4f4f4"/><path d="M1 6 H13 V20 H1Z" fill="#d8d8d8"/><path d="M13 6 L17 3 V17 L13 20Z" fill="#b8b8b8"/><path d="M8 16 L12 13 H24 L20 16Z" fill="#f4f4f4"/><path d="M8 16 H20 V30 H8Z" fill="#e4e4e4"/><path d="M20 16 L24 13 V27 L20 30Z" fill="#c4c4c4"/><circle cx="27" cy="6" r="5" fill="#f7cc6b"/><rect x="25" y="11" width="4" height="3" fill="#fff"/></svg>
<div class="t" style="left:910px;width:300px;text-align:center;top:88.84px;font-size:12px;color:#f0f0f0;font-weight:normal;">Show</div>
<div class="t" style="left:911px;width:300px;text-align:center;top:103.84px;font-size:12px;color:#f0f0f0;font-weight:normal;">All</div>
<svg class="a" style="left:1084px;top:53px;" width="17" height="17" viewBox="0 0 17 17"><path d="M0 3 L2 1 H8 V7 L6 9 H0Z" fill="#ddd"/><path d="M5 9 L7 7 H13 V14 L11 16 H5Z" fill="#ccc"/><circle cx="14" cy="3" r="2.5" fill="#5fd0e0"/></svg>
<svg class="a" style="left:1084px;top:77px;" width="17" height="17" viewBox="0 0 17 17"><path d="M0 3 L2 1 H8 V7 L6 9 H0Z" fill="#ddd"/><path d="M5 9 L7 7 H13 V14 L11 16 H5Z" fill="#5fb0ea"/><path d="M12 0 V5 M10 3 L12 5 L14 3" stroke="#eee" fill="none"/></svg>
<svg class="a" style="left:1084px;top:103px;" width="16" height="8" viewBox="0 0 16 8"><rect x="0" y="1" width="7" height="6" fill="#eee"/><rect x="8" y="2" width="8" height="4" fill="#aaa"/></svg>
<div class="a" style="left:1105px;top:50px;width:24px;height:22px;background:#45536a;border:1px solid #5fb0ea"></div>
<svg class="a" style="left:1109px;top:54px;" width="16" height="14" viewBox="0 0 16 14"><rect x="0" y="0" width="3" height="4" fill="#eee"/><rect x="4" y="0" width="3" height="4" fill="#eee"/><rect x="9" y="0" width="3" height="4" fill="#eee"/><rect x="13" y="0" width="3" height="4" fill="#eee"/><path d="M8 6 C6 9 5 10 5 12 C5 14 11 14 11 12 C11 10 10 9 8 6Z" fill="#5fb0ea"/></svg>
<svg class="a" style="left:1109px;top:82px;" width="16" height="6" viewBox="0 0 16 6"><path d="M0 3 L4 0 H12 L16 3 L12 6 H4Z" fill="#ddd"/></svg>
<svg class="a" style="left:1109px;top:105px;" width="16" height="8" viewBox="0 0 16 8"><rect x="0" y="1" width="5" height="6" fill="#888"/><circle cx="8" cy="4" r="3" fill="#5fb0ea"/><rect x="11" y="1" width="5" height="6" fill="#888"/></svg>
<div class="a" style="left:1134px;top:50px;width:200px;height:22px;background:#4a5366;border:1px solid #2a303a"></div>
<svg class="a" style="left:1321px;top:59.0px;" width="8" height="5" viewBox="0 0 8 5"><path d="M0 0H8L4 5Z" fill="#e6e6e6"/></svg>
<svg class="a" style="left:1137px;top:53px;" width="16" height="16" viewBox="0 0 16 16"><rect width="16" height="16" fill="#5cc4c0"/><path d="M2 15 L6 4 L9 15Z" fill="#3a4c9a"/><rect x="8" y="6" width="7" height="8" fill="#c0151a"/><path d="M8 6 L10 4 H16 V6Z" fill="#e04040"/></svg>
<div class="t" style="left:1156px;top:54.84px;font-size:12px;color:#f0f0f0;font-weight:normal;font-style:normal;font-family:'Liberation Sans',sans-serif;">Realistic</div>
<div class="a" style="left:1134px;top:74px;width:200px;height:22px;background:#4a5366;border:1px solid #2a303a"></div>
<svg class="a" style="left:1321px;top:83.0px;" width="8" height="5" viewBox="0 0 8 5"><path d="M0 0H8L4 5Z" fill="#e6e6e6"/></svg>
<svg class="a" style="left:1138px;top:77px;" width="15" height="16" viewBox="0 0 15 16"><rect width="15" height="16" fill="#222"/><path d="M4 15 V6 H13 M7 15 V9 H13" stroke="#ddd" stroke-width="1.3" fill="none"/></svg>
<div class="t" style="left:1155px;top:78.84px;font-size:12px;color:#f0f0f0;font-weight:normal;font-style:normal;font-family:'Liberation Sans',sans-serif;">Unsaved View</div>
<svg class="a" style="left:1137px;top:101px;" width="17" height="17" viewBox="0 0 17 17"><path d="M0 4 V0 H4 M13 0 H17 V4 M17 13 V17 H13 M4 17 H0 V13" stroke="#ddd" fill="none"/><rect x="3" y="3" width="11" height="11" fill="#6a707a"/><path d="M8.5 4 L13 6.5 V11 L8.5 13.5 L4 11 V6.5Z" fill="#5fb0ea"/></svg>
<div class="t" style="left:1159px;top:103.84px;font-size:12px;color:#f0f0f0;font-weight:normal;font-style:normal;font-family:'Liberation Sans',sans-serif;">Single viewport</div>
<svg class="a" style="left:1245px;top:107px;" width="6" height="4" viewBox="0 0 6 4"><path d="M0 0H6L3 4Z" fill="#ddd"/></svg>
<svg class="a" style="left:1351px;top:52px;" width="34" height="32" viewBox="0 0 34 32"><path d="M0 5 L6 0 H22 L16 5Z" fill="#dcdcdc"/><path d="M0 12 L6 7 H22 L16 12Z" fill="#dcdcdc"/><path d="M0 18 L6 13 H18 L12 18Z" fill="#dcdcdc"/><rect x="19" y="13" width="14" height="18" fill="#eee"/><rect x="21" y="15" width="10" height="7" fill="#5fb0ea"/><path d="M22 25 H30 M22 28 H30" stroke="#666"/></svg>
<div class="t" style="left:1218.5px;width:300px;text-align:center;top:88.84px;font-size:12px;color:#f0f0f0;font-weight:normal;">Layer</div>
<div class="t" style="left:1218.5px;width:300px;text-align:center;top:103.84px;font-size:12px;color:#f0f0f0;font-weight:normal;">Properties</div>
<div class="a" style="left:1400px;top:50px;width:207px;height:22px;background:#4a5366;border:1px solid #2a303a"></div>
<svg class="a" style="left:1594px;top:59.0px;" width="8" height="5" viewBox="0 0 8 5"><path d="M0 0H8L4 5Z" fill="#e6e6e6"/></svg>
<svg class="a" style="left:1405px;top:53px;" width="11" height="15" viewBox="0 0 11 15"><circle cx="5.5" cy="5" r="5" fill="#f7cc6b"/><rect x="3" y="10" width="5" height="4" rx="1" fill="#fff"/></svg>
<svg class="a" style="left:1422px;top:53px;" width="16" height="16" viewBox="0 0 16 16"><circle cx="8" cy="8" r="4.5" fill="#f7cc6b"/><path d="M8 0V2M8 14V16M0 8H2M14 8H16M2.5 2.5L4 4M12 12L13.5 13.5M2.5 13.5L4 12M12 4L13.5 2.5" stroke="#f7cc6b" stroke-width="1.2"/></svg>
<svg class="a" style="left:1442px;top:53px;" width="15" height="15" viewBox="0 0 15 15"><rect x="0" y="7" width="11" height="8" fill="#f7cc6b"/><path d="M7 7 V4 C7 0 14 0 14 4 V6" stroke="#f7cc6b" stroke-width="2" fill="none"/><rect x="5" y="10" width="1.5" height="3" fill="#333"/></svg>
<div class="a" style="left:1462px;top:54px;width:15px;height:15px;background:#e8f0ff;border:1.5px solid #000"></div>
<div class="t" style="left:1481px;top:54.84px;font-size:12px;color:#dfe6f0;font-weight:normal;font-style:normal;font-family:'Liberation Sans',sans-serif;">0</div>
<svg class="a" style="left:1403px;top:77px;" width="18" height="18" viewBox="0 0 18 18"><path d="M0 4 L4 0 H14 L10 4Z" fill="#dcdcdc"/><circle cx="13" cy="11" r="3.5" fill="#5fd0e0"/><rect x="11.5" y="14" width="3" height="3" fill="#fff"/></svg>
<svg class="a" style="left:1427px;top:77px;" width="18" height="18" viewBox="0 0 18 18"><path d="M0 4 L4 0 H14 L10 4Z" fill="#dcdcdc"/><path d="M0 8 L4 4 H14 L10 8Z" fill="#dcdcdc"/><path d="M0 12 L4 8 H14 L10 12Z" fill="#dcdcdc"/><path d="M8 17 L15 10 M8 17 H12 M8 17 V13" stroke="#eee" stroke-width="1.2" fill="none"/><path d="M0 12 L4 8 H14 L10 12Z" fill="#5fb0ea"/></svg>
<svg class="a" style="left:1451px;top:77px;" width="18" height="18" viewBox="0 0 18 18"><path d="M0 4 L4 0 H14 L10 4Z" fill="#dcdcdc"/><path d="M12 7 V17 M7.5 9.5 L16.5 14.5 M7.5 14.5 L16.5 9.5" stroke="#5fd0e0" stroke-width="1.5"/></svg>
<svg class="a" style="left:1475px;top:77px;" width="18" height="18" viewBox="0 0 18 18"><path d="M0 4 L4 0 H14 L10 4Z" fill="#dcdcdc"/><rect x="9" y="11" width="8" height="6" fill="#5fd0e0"/><path d="M10.5 11 V9 C10.5 7 15.5 7 15.5 9 V11" stroke="#5fd0e0" stroke-width="1.4" fill="none"/></svg>
<svg class="a" style="left:1498px;top:77px;" width="18" height="17" viewBox="0 0 18 17"><circle cx="10" cy="3" r="3" fill="#ccc"/><path d="M0 9 L4 6 H18 L14 9Z" fill="#5fb0ea"/><path d="M0 13 L4 10 H18 L14 13Z" fill="#dcdcdc"/><path d="M0 17 L4 14 H18 L14 17Z" fill="#dcdcdc"/></svg>
<div class="t" style="left:1520px;top:78.84px;font-size:12px;color:#f0f0f0;font-weight:normal;font-style:normal;font-family:'Liberation Sans',sans-serif;">Make Current</div>
<svg class="a" style="left:1403px;top:101px;" width="18" height="18" viewBox="0 0 18 18"><path d="M0 4 L4 0 H14 L10 4Z" fill="#dcdcdc"/><path d="M0 8 L4 4 H14 L10 8Z" fill="#dcdcdc"/><path d="M0 12 L4 8 H14 L10 12Z" fill="#dcdcdc"/><circle cx="13" cy="11" r="3.5" fill="#f7cc6b"/><rect x="11.5" y="14" width="3" height="3" fill="#fff"/></svg>
<svg class="a" style="left:1427px;top:101px;" width="18" height="18" viewBox="0 0 18 18"><path d="M0 4 L4 0 H14 L10 4Z" fill="#dcdcdc"/><path d="M0 8 L4 4 H14 L10 8Z" fill="#dcdcdc"/><path d="M0 12 L4 8 H14 L10 12Z" fill="#dcdcdc"/><path d="M8 17 L15 10 M15 10 H11 M15 10 V14" stroke="#eee" stroke-width="1.2" fill="none"/><path d="M0 12 L4 8 H14 L10 12Z" fill="#5fb0ea"/></svg>
<svg class="a" style="left:1451px;top:101px;" width="18" height="18" viewBox="0 0 18 18"><path d="M0 4 L4 0 H14 L10 4Z" fill="#dcdcdc"/><path d="M0 8 L4 4 H14 L10 8Z" fill="#dcdcdc"/><path d="M0 12 L4 8 H14 L10 12Z" fill="#dcdcdc"/><circle cx="12" cy="12" r="3" fill="#f7cc6b"/></svg>
<svg class="a" style="left:1475px;top:101px;" width="18" height="18" viewBox="0 0 18 18"><path d="M0 4 L4 0 H14 L10 4Z" fill="#dcdcdc"/><rect x="7" y="11" width="8" height="6" fill="#f7cc6b"/><path d="M11 11 V9 C11 6 16 6 16 9" stroke="#f7cc6b" stroke-width="1.4" fill="none"/></svg>
<svg class="a" style="left:1498px;top:101px;" width="18" height="17" viewBox="0 0 18 17"><path d="M0 4 L4 1 H14 L10 4Z" fill="#dcdcdc"/><path d="M0 8 L4 5 H14 L10 8Z" fill="#dcdcdc"/><path d="M0 12 L4 9 H12 L8 12Z" fill="#dcdcdc"/><path d="M9 15 L14 9 L17 12 L12 17Z" fill="#f7cc6b"/><path d="M14 9 L16 7 L18 9 L17 12Z" fill="#fff"/></svg>
<div class="t" style="left:1520px;top:102.84px;font-size:12px;color:#f0f0f0;font-weight:normal;font-style:normal;font-family:'Liberation Sans',sans-serif;">Match Layer</div>
<svg class="a" style="left:1619px;top:52px;" width="24" height="32" viewBox="0 0 24 32"><circle cx="10" cy="8" r="7" stroke="#2a2a2a" stroke-width="2" fill="none"/><path d="M8 28 L3 20 C2 18 4 17 6 18 L8 21 V5 C8 3 11 3 11 5 V14 C11 12 14 12 14 14 V15 C14 13 17 13 17 15 V16 C17 14 20 14 20 16 V24 C20 28 17 31 14 31 H11Z" fill="#f2f2f2"/></svg>
<div class="t" style="left:1480px;width:300px;text-align:center;top:88.84px;font-size:12px;color:#f0f0f0;font-weight:normal;">Select</div>
<div class="t" style="left:1480px;width:300px;text-align:center;top:103.84px;font-size:12px;color:#f0f0f0;font-weight:normal;">Mode</div>
<div class="a" style="left:152px;top:173px;width:1539px;height:752px;background:#000;"></div>
<svg class="a" style="left:152px;top:173px;overflow:hidden" width="1539" height="752" viewBox="0 0 1539 752" shape-rendering="crispEdges"><line x1="0" y1="3.7" x2="1539" y2="-438.7" stroke="#16181e"/><line x1="0" y1="25.0" x2="1539" y2="-417.5" stroke="#16181e"/><line x1="0" y1="46.2" x2="1539" y2="-396.2" stroke="#16181e"/><line x1="0" y1="67.5" x2="1539" y2="-375.0" stroke="#292d3b"/><line x1="0" y1="88.8" x2="1539" y2="-353.7" stroke="#16181e"/><line x1="0" y1="110.0" x2="1539" y2="-332.4" stroke="#16181e"/><line x1="0" y1="131.3" x2="1539" y2="-311.2" stroke="#16181e"/><line x1="0" y1="152.5" x2="1539" y2="-289.9" stroke="#16181e"/><line x1="0" y1="173.8" x2="1539" y2="-268.7" stroke="#292d3b"/><line x1="0" y1="195.1" x2="1539" y2="-247.4" stroke="#16181e"/><line x1="0" y1="216.3" x2="1539" y2="-226.1" stroke="#16181e"/><line x1="0" y1="237.6" x2="1539" y2="-204.9" stroke="#16181e"/><line x1="0" y1="258.8" x2="1539" y2="-183.6" stroke="#16181e"/><line x1="0" y1="280.1" x2="1539" y2="-162.4" stroke="#292d3b"/><line x1="0" y1="301.4" x2="1539" y2="-141.1" stroke="#16181e"/><line x1="0" y1="322.6" x2="1539" y2="-119.8" stroke="#16181e"/><line x1="0" y1="343.9" x2="1539" y2="-98.6" stroke="#16181e"/><line x1="0" y1="365.1" x2="1539" y2="-77.3" stroke="#16181e"/><line x1="0" y1="386.4" x2="1539" y2="-56.1" stroke="#292d3b"/><line x1="0" y1="407.7" x2="1539" y2="-34.8" stroke="#16181e"/><line x1="0" y1="428.9" x2="1539" y2="-13.5" stroke="#16181e"/><line x1="0" y1="450.2" x2="1539" y2="7.7" stroke="#16181e"/><line x1="0" y1="471.4" x2="1539" y2="29.0" stroke="#16181e"/><line x1="0" y1="492.7" x2="1539" y2="50.2" stroke="#292d3b"/><line x1="0" y1="514.0" x2="1539" y2="71.5" stroke="#16181e"/><line x1="0" y1="535.2" x2="1539" y2="92.8" stroke="#16181e"/><line x1="0" y1="556.5" x2="1539" y2="114.0" stroke="#16181e"/><line x1="0" y1="577.7" x2="1539" y2="135.3" stroke="#16181e"/><line x1="0" y1="599.0" x2="1539" y2="156.5" stroke="#292d3b"/><line x1="0" y1="620.3" x2="1539" y2="177.8" stroke="#16181e"/><line x1="0" y1="641.5" x2="1539" y2="199.1" stroke="#16181e"/><line x1="0" y1="662.8" x2="1539" y2="220.3" stroke="#16181e"/><line x1="0" y1="684.0" x2="1539" y2="241.6" stroke="#16181e"/><line x1="0" y1="705.3" x2="1539" y2="262.8" stroke="#292d3b"/><line x1="0" y1="726.6" x2="1539" y2="284.1" stroke="#16181e"/><line x1="0" y1="747.8" x2="1539" y2="305.4" stroke="#16181e"/><line x1="0" y1="769.1" x2="1539" y2="326.6" stroke="#16181e"/><line x1="0" y1="790.3" x2="1539" y2="347.9" stroke="#16181e"/><line x1="0" y1="811.6" x2="1539" y2="369.1" stroke="#292d3b"/><line x1="0" y1="832.9" x2="1539" y2="390.4" stroke="#16181e"/><line x1="0" y1="854.1" x2="1539" y2="411.7" stroke="#16181e"/><line x1="0" y1="875.4" x2="1539" y2="432.9" stroke="#16181e"/><line x1="0" y1="896.6" x2="1539" y2="454.2" stroke="#16181e"/><line x1="0" y1="917.9" x2="1539" y2="475.4" stroke="#292d3b"/><line x1="0" y1="939.2" x2="1539" y2="496.7" stroke="#16181e"/><line x1="0" y1="960.4" x2="1539" y2="518.0" stroke="#16181e"/><line x1="0" y1="981.7" x2="1539" y2="539.2" stroke="#16181e"/><line x1="0" y1="1002.9" x2="1539" y2="560.5" stroke="#16181e"/><line x1="0" y1="1024.2" x2="1539" y2="581.7" stroke="#292d3b"/><line x1="0" y1="1045.5" x2="1539" y2="603.0" stroke="#16181e"/><line x1="0" y1="1066.7" x2="1539" y2="624.3" stroke="#16181e"/><line x1="0" y1="1088.0" x2="1539" y2="645.5" stroke="#16181e"/><line x1="0" y1="1109.2" x2="1539" y2="666.8" stroke="#16181e"/><line x1="0" y1="1130.5" x2="1539" y2="688.0" stroke="#292d3b"/><line x1="0" y1="1151.8" x2="1539" y2="709.3" stroke="#16181e"/><line x1="0" y1="1173.0" x2="1539" y2="730.6" stroke="#16181e"/><line x1="0" y1="1194.3" x2="1539" y2="751.8" stroke="#16181e"/><line x1="-325.7" y1="0" x2="-2.3" y2="752" stroke="#16181e"/><line x1="-299.6" y1="0" x2="23.7" y2="752" stroke="#292d3b"/><line x1="-273.6" y1="0" x2="49.8" y2="752" stroke="#16181e"/><line x1="-247.5" y1="0" x2="75.8" y2="752" stroke="#16181e"/><line x1="-221.5" y1="0" x2="101.9" y2="752" stroke="#16181e"/><line x1="-195.4" y1="0" x2="128.0" y2="752" stroke="#16181e"/><line x1="-169.3" y1="0" x2="154.0" y2="752" stroke="#292d3b"/><line x1="-143.3" y1="0" x2="180.1" y2="752" stroke="#16181e"/><line x1="-117.2" y1="0" x2="206.1" y2="752" stroke="#16181e"/><line x1="-91.2" y1="0" x2="232.2" y2="752" stroke="#16181e"/><line x1="-65.1" y1="0" x2="258.2" y2="752" stroke="#16181e"/><line x1="-39.0" y1="0" x2="284.3" y2="752" stroke="#292d3b"/><line x1="-13.0" y1="0" x2="310.4" y2="752" stroke="#16181e"/><line x1="13.1" y1="0" x2="336.4" y2="752" stroke="#16181e"/><line x1="39.1" y1="0" x2="362.5" y2="752" stroke="#16181e"/><line x1="65.2" y1="0" x2="388.6" y2="752" stroke="#16181e"/><line x1="91.2" y1="0" x2="414.6" y2="752" stroke="#292d3b"/><line x1="117.3" y1="0" x2="440.7" y2="752" stroke="#16181e"/><line x1="143.4" y1="0" x2="466.7" y2="752" stroke="#16181e"/><line x1="169.4" y1="0" x2="492.8" y2="752" stroke="#16181e"/><line x1="195.5" y1="0" x2="518.9" y2="752" stroke="#16181e"/><line x1="221.5" y1="0" x2="544.9" y2="752" stroke="#292d3b"/><line x1="247.6" y1="0" x2="571.0" y2="752" stroke="#16181e"/><line x1="273.7" y1="0" x2="597.0" y2="752" stroke="#16181e"/><line x1="299.7" y1="0" x2="623.1" y2="752" stroke="#16181e"/><line x1="325.8" y1="0" x2="649.1" y2="752" stroke="#16181e"/><line x1="351.8" y1="0" x2="675.2" y2="752" stroke="#292d3b"/><line x1="377.9" y1="0" x2="701.3" y2="752" stroke="#16181e"/><line x1="404.0" y1="0" x2="727.3" y2="752" stroke="#16181e"/><line x1="430.0" y1="0" x2="753.4" y2="752" stroke="#16181e"/><line x1="456.1" y1="0" x2="779.5" y2="752" stroke="#16181e"/><line x1="482.1" y1="0" x2="805.5" y2="752" stroke="#292d3b"/><line x1="508.2" y1="0" x2="831.6" y2="752" stroke="#16181e"/><line x1="534.3" y1="0" x2="857.6" y2="752" stroke="#16181e"/><line x1="560.3" y1="0" x2="883.7" y2="752" stroke="#16181e"/><line x1="586.4" y1="0" x2="909.8" y2="752" stroke="#16181e"/><line x1="612.4" y1="0" x2="935.8" y2="752" stroke="#292d3b"/><line x1="638.5" y1="0" x2="961.9" y2="752" stroke="#16181e"/><line x1="664.6" y1="0" x2="987.9" y2="752" stroke="#16181e"/><line x1="690.6" y1="0" x2="1014.0" y2="752" stroke="#16181e"/><line x1="716.7" y1="0" x2="1040.0" y2="752" stroke="#16181e"/><line x1="742.8" y1="0" x2="1066.1" y2="752" stroke="#292d3b"/><line x1="768.8" y1="0" x2="1092.2" y2="752" stroke="#16181e"/><line x1="794.9" y1="0" x2="1118.2" y2="752" stroke="#16181e"/><line x1="820.9" y1="0" x2="1144.3" y2="752" stroke="#16181e"/><line x1="847.0" y1="0" x2="1170.3" y2="752" stroke="#16181e"/><line x1="873.0" y1="0" x2="1196.4" y2="752" stroke="#292d3b"/><line x1="899.1" y1="0" x2="1222.5" y2="752" stroke="#16181e"/><line x1="925.2" y1="0" x2="1248.5" y2="752" stroke="#16181e"/><line x1="951.2" y1="0" x2="1274.6" y2="752" stroke="#16181e"/><line x1="977.3" y1="0" x2="1300.7" y2="752" stroke="#16181e"/><line x1="1003.3" y1="0" x2="1326.7" y2="752" stroke="#292d3b"/><line x1="1029.4" y1="0" x2="1352.8" y2="752" stroke="#16181e"/><line x1="1055.5" y1="0" x2="1378.8" y2="752" stroke="#16181e"/><line x1="1081.5" y1="0" x2="1404.9" y2="752" stroke="#16181e"/><line x1="1107.6" y1="0" x2="1430.9" y2="752" stroke="#16181e"/><line x1="1133.6" y1="0" x2="1457.0" y2="752" stroke="#292d3b"/><line x1="1159.7" y1="0" x2="1483.1" y2="752" stroke="#16181e"/><line x1="1185.8" y1="0" x2="1509.1" y2="752" stroke="#16181e"/><line x1="1211.8" y1="0" x2="1535.2" y2="752" stroke="#16181e"/><line x1="1237.9" y1="0" x2="1561.2" y2="752" stroke="#16181e"/><line x1="1264.0" y1="0" x2="1587.3" y2="752" stroke="#292d3b"/><line x1="1290.0" y1="0" x2="1613.4" y2="752" stroke="#16181e"/><line x1="1316.1" y1="0" x2="1639.4" y2="752" stroke="#16181e"/><line x1="1342.1" y1="0" x2="1665.5" y2="752" stroke="#16181e"/><line x1="1368.2" y1="0" x2="1691.5" y2="752" stroke="#16181e"/><line x1="1394.2" y1="0" x2="1717.6" y2="752" stroke="#292d3b"/><line x1="1420.3" y1="0" x2="1743.7" y2="752" stroke="#16181e"/><line x1="1446.4" y1="0" x2="1769.7" y2="752" stroke="#16181e"/><line x1="1472.4" y1="0" x2="1795.8" y2="752" stroke="#16181e"/><line x1="1498.5" y1="0" x2="1821.8" y2="752" stroke="#16181e"/><line x1="1524.5" y1="0" x2="1847.9" y2="752" stroke="#292d3b"/></svg>
<svg class="a" style="left:0;top:0;pointer-events:none" width="1920" height="1080" viewBox="0 0 1920 1080"><defs>
<linearGradient id="cyH" gradientUnits="userSpaceOnUse" x1="595" y1="282" x2="606" y2="457">
 <stop offset="0" stop-color="#009a9c"/><stop offset="0.22" stop-color="#00abad"/><stop offset="0.45" stop-color="#00babb"/><stop offset="0.65" stop-color="#00afb0"/><stop offset="0.82" stop-color="#008c8e"/><stop offset="0.9" stop-color="#006c70"/><stop offset="1" stop-color="#006266"/></linearGradient>
<linearGradient id="cyV" gradientUnits="userSpaceOnUse" x1="251" y1="600" x2="441" y2="586">
 <stop offset="0" stop-color="#00b4b6"/><stop offset="0.2" stop-color="#00c8ca"/><stop offset="0.5" stop-color="#00c4c6"/><stop offset="0.75" stop-color="#00acae"/><stop offset="1" stop-color="#008e90"/></linearGradient>
<linearGradient id="cyE" gradientUnits="userSpaceOnUse" x1="240" y1="0" x2="420" y2="0">
 <stop offset="0" stop-color="#00b8ba"/><stop offset="0.35" stop-color="#00c6c7"/><stop offset="0.7" stop-color="#00aeb0"/><stop offset="1" stop-color="#009a9c"/></linearGradient>
<linearGradient id="cyC" gradientUnits="userSpaceOnUse" x1="356" y1="405" x2="395" y2="392">
 <stop offset="0" stop-color="#00b2b4"/><stop offset="0.6" stop-color="#009a9c"/><stop offset="1" stop-color="#008284"/></linearGradient>
<linearGradient id="cyEnd" gradientUnits="userSpaceOnUse" x1="272" y1="0" x2="445" y2="0">
 <stop offset="0" stop-color="#009a9c"/><stop offset="0.3" stop-color="#00a2a4"/><stop offset="0.6" stop-color="#00b8ba"/><stop offset="1" stop-color="#00c8c9"/></linearGradient>
<linearGradient id="rdH" gradientUnits="userSpaceOnUse" x1="990" y1="362" x2="991" y2="388">
 <stop offset="0" stop-color="#8a0000"/><stop offset="0.25" stop-color="#a80000"/><stop offset="0.5" stop-color="#c20000"/><stop offset="0.8" stop-color="#9a0000"/><stop offset="1" stop-color="#5a0000"/></linearGradient>
<linearGradient id="rdD" gradientUnits="userSpaceOnUse" x1="1058" y1="430" x2="1082" y2="420">
 <stop offset="0" stop-color="#b40000"/><stop offset="0.4" stop-color="#c40000"/><stop offset="0.75" stop-color="#a80000"/><stop offset="1" stop-color="#860000"/></linearGradient>
<linearGradient id="gyL" gradientUnits="userSpaceOnUse" x1="1240" y1="520" x2="1288" y2="528">
 <stop offset="0" stop-color="#b8b9b7"/><stop offset="0.3" stop-color="#cfd0ce"/><stop offset="0.6" stop-color="#bdbebc"/><stop offset="1" stop-color="#8e8f8d"/></linearGradient>
<linearGradient id="gyR" gradientUnits="userSpaceOnUse" x1="1410" y1="430" x2="1392" y2="468">
 <stop offset="0" stop-color="#a9aaa8"/><stop offset="0.35" stop-color="#c4c5c3"/><stop offset="0.65" stop-color="#b6b7b5"/><stop offset="1" stop-color="#858684"/></linearGradient>
<linearGradient id="gyE" gradientUnits="userSpaceOnUse" x1="1318" y1="362" x2="1300" y2="395"><stop offset="0" stop-color="#a4a5a3"/><stop offset="0.6" stop-color="#c2c3c1"/><stop offset="1" stop-color="#b4b5b3"/></linearGradient>
<radialGradient id="mk" cx="0.5" cy="0.5" r="0.5"><stop offset="0" stop-color="#3a9ccc"/><stop offset="1" stop-color="#2a6d94"/></radialGradient>
</defs><path d="M405 294.7 L750.9 272.6 C756 300 760 340 762.1 382 L762.1 446.4 L420.6 467.7 Z" fill="url(#cyH)"/><path d="M244.4 455.5 C255 437 285 418 331 407.7 C355 405 390 412 418.6 453.5 L420.6 467.7 L428 560 L445.5 741.7 C440 780 390 801 357.6 800.9 C320 800 275 785 272.4 749 L251 540 Z" fill="url(#cyV)"/><path d="M232.2 313 C233 307 238 304 244.4 303.8 L405 294.7 L418.6 453.5 C390 412 355 405 331 407.7 C285 418 255 437 244.4 455.5 L231.2 321.1 Z" fill="url(#cyE)"/><path d="M249.5 303.8 L405 294.7 L411 356 L353.4 359.8 C330 340 300 320 249.5 303.8 Z" fill="#00a6a8"/><path d="M353.4 359.8 L413.5 354.7 L418.6 453 C414 437 405 420 395.2 406.6 C385 393 372 378 353.4 359.8 Z" fill="#00a9ab"/><path d="M353.4 359.8 C372 378 385 393 395.2 406.6 C405 420 414 437 418.6 453.5 C410 432 390 414 358.5 408.3 Z" fill="url(#cyC)"/><path d="M272.4 749 C272 722 310 702 357.6 700.6 C400 701 440 715 445.5 741.7 C440 780 390 801 357.6 800.9 C320 800 275 785 272.4 749 Z" fill="url(#cyEnd)"/><path d="M249.5 304.8 L260.7 433.1" stroke="#8a8e8e" stroke-width="1" fill="none"/><path d="M249.5 303.8 C281 313 311.6 327.2 334 343.5 C345 351 353 359 353.4 359.8 C374.8 382.2 395.2 406.6 409.4 427 C414 435 417 443 418.6 453" stroke="#8a8e8e" stroke-width="1" fill="none"/><path d="M244.4 455.5 C255 437 285 418 331 407.7 C355 405 390 412 418.6 453.5" stroke="#8a8e8e" stroke-width="1" fill="none"/><path d="M353.4 359.8 L413.5 354.7 M353.4 359.8 L358.5 407.7" stroke="#8a8e8e" stroke-width="1" fill="none"/><path d="M407.4 294.6 L418.6 452.5 M411.4 330.3 L756 308.9 M418.6 452.5 L762.1 431 M331 407.7 L338.1 480 L357.6 800.9" stroke="#8a8e8e" stroke-width="1" fill="none"/><path d="M272.4 749 C272 722 310 702 357.6 700.6 C400 701 440 715 445.5 741.7 C440 780 390 801 357.6 800.9 C320 800 275 785 272.4 749 Z" stroke="#8a8e8e" stroke-width="1" fill="none"/><path d="M232.2 313 C233 307 238 304 244.4 303.8 L750.9 272.6" stroke="#6a8a8a" stroke-width="0.8" fill="none"/><clipPath id="cEnd"><path d="M272.4 749 C272 722 310 702 357.6 700.6 C400 701 440 715 445.5 741.7 C440 780 390 801 357.6 800.9 C320 800 275 785 272.4 749 Z M420.6 467.7 L762.1 446.4 L762.1 431 L418.6 452.5Z"/></clipPath><g clip-path="url(#cEnd)" stroke="#2f6a70" stroke-width="1" opacity="0.9"><line x1="152" y1="27.9" x2="1691" y2="-414.6"/><line x1="152" y1="49.2" x2="1691" y2="-393.3"/><line x1="152" y1="70.4" x2="1691" y2="-372.0"/><line x1="152" y1="91.7" x2="1691" y2="-350.8"/><line x1="152" y1="112.9" x2="1691" y2="-329.5"/><line x1="152" y1="134.2" x2="1691" y2="-308.3"/><line x1="152" y1="155.5" x2="1691" y2="-287.0"/><line x1="152" y1="176.7" x2="1691" y2="-265.7"/><line x1="152" y1="198.0" x2="1691" y2="-244.5"/><line x1="152" y1="219.2" x2="1691" y2="-223.2"/><line x1="152" y1="240.5" x2="1691" y2="-202.0"/><line x1="152" y1="261.8" x2="1691" y2="-180.7"/><line x1="152" y1="283.0" x2="1691" y2="-159.4"/><line x1="152" y1="304.3" x2="1691" y2="-138.2"/><line x1="152" y1="325.5" x2="1691" y2="-116.9"/><line x1="152" y1="346.8" x2="1691" y2="-95.7"/><line x1="152" y1="368.1" x2="1691" y2="-74.4"/><line x1="152" y1="389.3" x2="1691" y2="-53.1"/><line x1="152" y1="410.6" x2="1691" y2="-31.9"/><line x1="152" y1="431.8" x2="1691" y2="-10.6"/><line x1="152" y1="453.1" x2="1691" y2="10.6"/><line x1="152" y1="474.4" x2="1691" y2="31.9"/><line x1="152" y1="495.6" x2="1691" y2="53.2"/><line x1="152" y1="516.9" x2="1691" y2="74.4"/><line x1="152" y1="538.1" x2="1691" y2="95.7"/><line x1="152" y1="559.4" x2="1691" y2="116.9"/><line x1="152" y1="580.7" x2="1691" y2="138.2"/><line x1="152" y1="601.9" x2="1691" y2="159.5"/><line x1="152" y1="623.2" x2="1691" y2="180.7"/><line x1="152" y1="644.4" x2="1691" y2="202.0"/><line x1="152" y1="665.7" x2="1691" y2="223.2"/><line x1="152" y1="687.0" x2="1691" y2="244.5"/><line x1="152" y1="708.2" x2="1691" y2="265.8"/><line x1="152" y1="729.5" x2="1691" y2="287.0"/><line x1="152" y1="750.7" x2="1691" y2="308.3"/><line x1="152" y1="772.0" x2="1691" y2="329.5"/><line x1="152" y1="793.3" x2="1691" y2="350.8"/><line x1="152" y1="814.5" x2="1691" y2="372.1"/><line x1="152" y1="835.8" x2="1691" y2="393.3"/><line x1="152" y1="857.0" x2="1691" y2="414.6"/><line x1="152" y1="878.3" x2="1691" y2="435.8"/><line x1="152" y1="899.6" x2="1691" y2="457.1"/><line x1="152" y1="920.8" x2="1691" y2="478.4"/><line x1="152" y1="942.1" x2="1691" y2="499.6"/><line x1="152" y1="963.3" x2="1691" y2="520.9"/><line x1="152" y1="984.6" x2="1691" y2="542.1"/><line x1="152" y1="1005.9" x2="1691" y2="563.4"/><line x1="152" y1="1027.1" x2="1691" y2="584.7"/><line x1="152" y1="1048.4" x2="1691" y2="605.9"/><line x1="152" y1="1069.6" x2="1691" y2="627.2"/><line x1="152" y1="1090.9" x2="1691" y2="648.4"/><line x1="152" y1="1112.2" x2="1691" y2="669.7"/><line x1="152" y1="1133.4" x2="1691" y2="691.0"/><line x1="152" y1="1154.7" x2="1691" y2="712.2"/><line x1="152" y1="1175.9" x2="1691" y2="733.5"/><line x1="152" y1="1197.2" x2="1691" y2="754.7"/><line x1="152" y1="1218.5" x2="1691" y2="776.0"/><line x1="152" y1="1239.7" x2="1691" y2="797.3"/><line x1="152" y1="1261.0" x2="1691" y2="818.5"/><line x1="152" y1="1282.2" x2="1691" y2="839.8"/><line x1="152" y1="1303.5" x2="1691" y2="861.0"/><line x1="152" y1="1324.8" x2="1691" y2="882.3"/><line x1="152" y1="1346.0" x2="1691" y2="903.6"/><line x1="152" y1="1367.3" x2="1691" y2="924.8"/><line x1="152" y1="1388.5" x2="1691" y2="946.1"/><line x1="152" y1="1409.8" x2="1691" y2="967.3"/><line x1="152" y1="1431.1" x2="1691" y2="988.6"/><line x1="152" y1="1452.3" x2="1691" y2="1009.9"/><line x1="152" y1="1473.6" x2="1691" y2="1031.1"/><line x1="152" y1="1494.8" x2="1691" y2="1052.4"/><line x1="152" y1="1516.1" x2="1691" y2="1073.6"/><line x1="152" y1="1537.4" x2="1691" y2="1094.9"/><line x1="-799.1" y1="173" x2="-475.8" y2="925"/><line x1="-773.1" y1="173" x2="-449.7" y2="925"/><line x1="-747.0" y1="173" x2="-423.7" y2="925"/><line x1="-721.0" y1="173" x2="-397.6" y2="925"/><line x1="-694.9" y1="173" x2="-371.5" y2="925"/><line x1="-668.8" y1="173" x2="-345.5" y2="925"/><line x1="-642.8" y1="173" x2="-319.4" y2="925"/><line x1="-616.7" y1="173" x2="-293.4" y2="925"/><line x1="-590.7" y1="173" x2="-267.3" y2="925"/><line x1="-564.6" y1="173" x2="-241.2" y2="925"/><line x1="-538.5" y1="173" x2="-215.2" y2="925"/><line x1="-512.5" y1="173" x2="-189.1" y2="925"/><line x1="-486.4" y1="173" x2="-163.1" y2="925"/><line x1="-460.4" y1="173" x2="-137.0" y2="925"/><line x1="-434.3" y1="173" x2="-110.9" y2="925"/><line x1="-408.2" y1="173" x2="-84.9" y2="925"/><line x1="-382.2" y1="173" x2="-58.8" y2="925"/><line x1="-356.1" y1="173" x2="-32.8" y2="925"/><line x1="-330.1" y1="173" x2="-6.7" y2="925"/><line x1="-304.0" y1="173" x2="19.4" y2="925"/><line x1="-277.9" y1="173" x2="45.4" y2="925"/><line x1="-251.9" y1="173" x2="71.5" y2="925"/><line x1="-225.8" y1="173" x2="97.5" y2="925"/><line x1="-199.8" y1="173" x2="123.6" y2="925"/><line x1="-173.7" y1="173" x2="149.7" y2="925"/><line x1="-147.6" y1="173" x2="175.7" y2="925"/><line x1="-121.6" y1="173" x2="201.8" y2="925"/><line x1="-95.5" y1="173" x2="227.8" y2="925"/><line x1="-69.5" y1="173" x2="253.9" y2="925"/><line x1="-43.4" y1="173" x2="280.0" y2="925"/><line x1="-17.3" y1="173" x2="306.0" y2="925"/><line x1="8.7" y1="173" x2="332.1" y2="925"/><line x1="34.8" y1="173" x2="358.1" y2="925"/><line x1="60.8" y1="173" x2="384.2" y2="925"/><line x1="86.9" y1="173" x2="410.2" y2="925"/><line x1="113.0" y1="173" x2="436.3" y2="925"/><line x1="139.0" y1="173" x2="462.4" y2="925"/><line x1="165.1" y1="173" x2="488.4" y2="925"/><line x1="191.1" y1="173" x2="514.5" y2="925"/><line x1="217.2" y1="173" x2="540.5" y2="925"/><line x1="243.2" y1="173" x2="566.6" y2="925"/><line x1="269.3" y1="173" x2="592.7" y2="925"/><line x1="295.4" y1="173" x2="618.7" y2="925"/><line x1="321.4" y1="173" x2="644.8" y2="925"/><line x1="347.5" y1="173" x2="670.9" y2="925"/><line x1="373.5" y1="173" x2="696.9" y2="925"/><line x1="399.6" y1="173" x2="723.0" y2="925"/><line x1="425.7" y1="173" x2="749.0" y2="925"/><line x1="451.7" y1="173" x2="775.1" y2="925"/><line x1="477.8" y1="173" x2="801.1" y2="925"/><line x1="503.8" y1="173" x2="827.2" y2="925"/><line x1="529.9" y1="173" x2="853.3" y2="925"/><line x1="556.0" y1="173" x2="879.3" y2="925"/><line x1="582.0" y1="173" x2="905.4" y2="925"/><line x1="608.1" y1="173" x2="931.4" y2="925"/><line x1="634.1" y1="173" x2="957.5" y2="925"/><line x1="660.2" y1="173" x2="983.6" y2="925"/><line x1="686.3" y1="173" x2="1009.6" y2="925"/><line x1="712.3" y1="173" x2="1035.7" y2="925"/><line x1="738.4" y1="173" x2="1061.8" y2="925"/><line x1="764.4" y1="173" x2="1087.8" y2="925"/><line x1="790.5" y1="173" x2="1113.9" y2="925"/><line x1="816.6" y1="173" x2="1139.9" y2="925"/><line x1="842.6" y1="173" x2="1166.0" y2="925"/><line x1="868.7" y1="173" x2="1192.0" y2="925"/><line x1="894.8" y1="173" x2="1218.1" y2="925"/><line x1="920.8" y1="173" x2="1244.2" y2="925"/><line x1="946.9" y1="173" x2="1270.2" y2="925"/><line x1="972.9" y1="173" x2="1296.3" y2="925"/><line x1="999.0" y1="173" x2="1322.3" y2="925"/><line x1="1025.0" y1="173" x2="1348.4" y2="925"/><line x1="1051.1" y1="173" x2="1374.5" y2="925"/><line x1="1077.2" y1="173" x2="1400.5" y2="925"/><line x1="1103.2" y1="173" x2="1426.6" y2="925"/><line x1="1129.3" y1="173" x2="1452.7" y2="925"/><line x1="1155.3" y1="173" x2="1478.7" y2="925"/><line x1="1181.4" y1="173" x2="1504.8" y2="925"/><line x1="1207.5" y1="173" x2="1530.8" y2="925"/><line x1="1233.5" y1="173" x2="1556.9" y2="925"/><line x1="1259.6" y1="173" x2="1582.9" y2="925"/><line x1="1285.6" y1="173" x2="1609.0" y2="925"/><line x1="1311.7" y1="173" x2="1635.1" y2="925"/><line x1="1337.8" y1="173" x2="1661.1" y2="925"/><line x1="1363.8" y1="173" x2="1687.2" y2="925"/><line x1="1389.9" y1="173" x2="1713.2" y2="925"/><line x1="1416.0" y1="173" x2="1739.3" y2="925"/><line x1="1442.0" y1="173" x2="1765.4" y2="925"/><line x1="1468.1" y1="173" x2="1791.4" y2="925"/><line x1="1494.1" y1="173" x2="1817.5" y2="925"/><line x1="1520.2" y1="173" x2="1843.5" y2="925"/><line x1="1546.2" y1="173" x2="1869.6" y2="925"/><line x1="1572.3" y1="173" x2="1895.7" y2="925"/><line x1="1598.4" y1="173" x2="1921.7" y2="925"/><line x1="1624.4" y1="173" x2="1947.8" y2="925"/><line x1="1650.5" y1="173" x2="1973.8" y2="925"/><line x1="1676.5" y1="173" x2="1999.9" y2="925"/><line x1="1702.6" y1="173" x2="2026.0" y2="925"/><line x1="1728.7" y1="173" x2="2052.0" y2="925"/><line x1="1754.7" y1="173" x2="2078.1" y2="925"/><line x1="1780.8" y1="173" x2="2104.2" y2="925"/></g><path d="M934.4 367.4 L1045.8 360 L1047.2 382.6 L935.4 390.3 Z" fill="url(#rdH)"/><path d="M1045.8 360 L1063.2 359.4 L1069.4 372.9 L1047.9 381.3 Z" fill="#a00000"/><path d="M1047.9 381.3 L1069.4 372.9 L1109.7 468.75 C1108 476 1095 480 1089.6 475.7 Z" fill="url(#rdD)"/><ellipse cx="1099.3" cy="471.5" rx="10.6" ry="6" transform="rotate(-22 1099.3 471.5)" fill="#a00000"/><path d="M934.4 367.4 L1045.8 360 L1063.2 359.4 L1069.4 372.9 L1109.7 468.75 M935.4 390.3 L1047.2 382.6 L1089.6 475.7 M934.4 367.4 L935.4 390.3 M935.4 371.5 L1046.5 365.6 M935.4 387.5 L1047.2 382 M1045.8 360 L1047.9 381.3 M1060.4 370.8 L1099.3 466 M1047.9 381.3 C1052 372 1060 369 1069.4 372.9 M1046 372 L1063.2 359.4" stroke="#9a9a9a" stroke-width="1" fill="none"/><ellipse cx="1099.3" cy="471.5" rx="10.6" ry="6" transform="rotate(-22 1099.3 471.5)" stroke="#9a9a9a" stroke-width="1" fill="none"/><path d="M1281.9 346.1 L1268 404.4 L1211.2 650.8 L1217 645.6 L1233.9 643.7 L1246.9 648.2 L1254.7 658.6 L1310.5 412.8 C1309 402 1306 394 1301.5 380.8 C1298 373 1291 360 1283 345 Z" fill="url(#gyL)"/><path d="M1281.9 346.1 L1337.5 385 L1537.8 528.9 L1542.2 533.3 L1540 542.2 L1528.9 558.9 L1517.8 564.4 L1309.7 418.3 L1308 412.8 C1306 402 1303 394 1299 380.8 C1296 373 1289 360 1281.9 346.1 Z" fill="url(#gyR)"/><path d="M1281.9 346.1 L1337.5 385 C1325 391 1315 400 1311 412.8 C1306 397 1302 385 1300 380.8 C1295 370 1288 358 1281.9 346.1 Z" fill="url(#gyE)"/><path d="M1211.2 650.8 L1217 645.6 L1233.9 643.7 L1246.9 648.2 L1254.7 658.6 L1246.9 668.3 L1233.9 669.6 L1218.3 663.8 Z" fill="#c4c5c3"/><path d="M1517.8 564.4 L1515.6 556.7 L1520 541.1 L1528.9 532.2 L1537.8 528.3 L1542.2 533.3 L1540 542.2 L1528.9 558.9 Z" fill="#c0c1bf"/><path d="M1268 405.8 C1272 402 1276 400.3 1277.8 400.3 L1288.9 401.7 C1295 403 1300 405 1302.8 405.8 L1309 412 M1333.3 385 C1325 390.6 1318 397.5 1312.5 407.2 L1311 412.8 M1287.5 401.7 L1269.4 485 L1233.9 643.7 M1325 390.6 L1537 528 M1281.9 346.1 C1290 362 1298 376 1300 380.8 C1305.6 394.7 1308 402 1309.7 410.7 M1281.9 346.1 L1269.4 401.7 M1284 350.3 L1272.2 400.3 M1300 380.8 L1295.8 401.7 M1302.8 393.3 L1315.3 399.6" stroke="#6e706e" stroke-width="0.9" fill="none"/><path d="M1211.2 650.8 L1217 645.6 L1233.9 643.7 L1246.9 648.2 L1254.7 658.6 L1246.9 668.3 L1233.9 669.6 L1218.3 663.8 Z M1214 660 L1250 650 M1228 645 L1240 669" stroke="#6e706e" stroke-width="0.9" fill="none"/><path d="M1517.8 564.4 L1515.6 556.7 L1520 541.1 L1528.9 532.2 L1537.8 528.3 M1518 548 L1540 540 M1522 540 L1533 556" stroke="#6e706e" stroke-width="0.9" fill="none"/><path d="M359 809 L364.2 812.5 L364.2 818 L359 821 L353.8 818 L353.8 812.5 Z" fill="url(#mk)" stroke="#7e8a92" stroke-width="1.2"/><path d="M356 815 H362 M359 812 V818" stroke="#1d5a80" stroke-width="0.8"/><path d="M934.7 393.3 L939.9000000000001 396.8 L939.9000000000001 402.3 L934.7 405.3 L929.5 402.3 L929.5 396.8 Z" fill="url(#mk)" stroke="#7e8a92" stroke-width="1.2"/><path d="M931.7 399.3 H937.7 M934.7 396.3 V402.3" stroke="#1d5a80" stroke-width="0.8"/><path d="M1098.6 486.4 L1103.8 489.9 L1103.8 495.4 L1098.6 498.4 L1093.3999999999999 495.4 L1093.3999999999999 489.9 Z" fill="url(#mk)" stroke="#7e8a92" stroke-width="1.2"/><path d="M1095.6 492.4 H1101.6 M1098.6 489.4 V495.4" stroke="#1d5a80" stroke-width="0.8"/><path d="M1232.6 677.2 L1237.8 680.7 L1237.8 686.2 L1232.6 689.2 L1227.3999999999999 686.2 L1227.3999999999999 680.7 Z" fill="url(#mk)" stroke="#7e8a92" stroke-width="1.2"/><path d="M1229.6 683.2 H1235.6 M1232.6 680.2 V686.2" stroke="#1d5a80" stroke-width="0.8"/><path d="M1528.3 566.2 L1533.5 569.7 L1533.5 575.2 L1528.3 578.2 L1523.1 575.2 L1523.1 569.7 Z" fill="url(#mk)" stroke="#7e8a92" stroke-width="1.2"/><path d="M1525.3 572.2 H1531.3 M1528.3 569.2 V575.2" stroke="#1d5a80" stroke-width="0.8"/><rect x="314" y="277" width="2" height="2" fill="#e00000"/><rect x="190" y="395" width="2" height="2" fill="#e00000"/><rect x="1052" y="355" width="2" height="2" fill="#e00000"/><rect x="1076" y="370" width="2" height="2" fill="#e00000"/><path d="M157 887 L202 874" stroke="#4e9a4e" stroke-width="4.5" stroke-linecap="round"/><path d="M186.5 836 L200 871" stroke="#d87878" stroke-width="3.5" stroke-linecap="round"/><path d="M202 846 L202 873" stroke="#4a6a9e" stroke-width="6"/><circle cx="202" cy="846" r="2.5" fill="#6aa0e0"/><path d="M184 822 L194 831 M194 822 L184 831" stroke="#e03030" stroke-width="1.2"/><path d="M201 829 H213 L201 841 H213" stroke="#2a7af0" stroke-width="1.4" fill="none"/><path d="M153 871 L158 876 L163 871 M158 876 V882" stroke="#30c030" stroke-width="1.2" fill="none"/><path d="M932.3 842.7 L964.6 922.9" stroke="#e07a40" stroke-width="1.1"/><path d="M962.5 861.5 L962.5 925" stroke="#5aa0e0" stroke-width="1.2"/><path d="M935.4 923.3 L1007.3 903.1" stroke="#8ad040" stroke-width="1.2"/><rect x="960" y="912" width="5" height="6" fill="#000" stroke="#fff" stroke-width="1.2"/></svg>
<div class="a" style="left:1630px;top:189px;width:10px;height:3px;background:#f0f0f0;"></div>
<svg class="a" style="left:1649px;top:182px;" width="13" height="12" viewBox="0 0 13 12"><rect x="1" y="4" width="8" height="7" fill="none" stroke="#f0f0f0" stroke-width="1.8"/><path d="M4 1.5 H11 V8" stroke="#f0f0f0" stroke-width="1.3" fill="none"/></svg>
<svg class="a" style="left:1668px;top:183px;" width="12" height="11" viewBox="0 0 12 11"><path d="M1.5 1.5 L10.5 9.5 M10.5 1.5 L1.5 9.5" stroke="#f0f0f0" stroke-width="2.2"/></svg>
<svg class="a" style="left:1545px;top:240px;" width="130" height="146" viewBox="0 0 130 146"><defs><radialGradient id="ring" cx="0.5" cy="0.5" r="0.5"><stop offset="0.6" stop-color="#1a1a1a"/><stop offset="0.8" stop-color="#333"/><stop offset="1" stop-color="#2a2a2a"/></radialGradient></defs><ellipse cx="63" cy="61" rx="55" ry="43" fill="none" stroke="#2c2c2c" stroke-width="15" transform="rotate(-8 63 61)"/><ellipse cx="63" cy="61" rx="48" ry="36" fill="none" stroke="#151515" stroke-width="3" transform="rotate(-8 63 61)"/><path d="M33 12.6 L77.1 0.7 L94.4 37.8 L47.2 49.6 Z" fill="#b8b8b8"/><path d="M47.2 49.6 L94.4 37.8 L92.9 63.7 L49.6 76.3 Z" fill="#a9a9a9"/><path d="M33 12.6 L47.2 49.6 L49.6 76.3 L35 40 Z" fill="#8c8c8c"/><path d="M47.2 49.6 L94.4 37.8" stroke="#555" stroke-dasharray="3 2" stroke-width="0.8"/><path d="M33 12.6 L47.2 49.6 L49.6 76.3" stroke="#555" stroke-dasharray="2 2" stroke-width="0.8" fill="none"/><text x="0" y="0" font-family="Liberation Sans" font-weight="bold" font-size="12" fill="#4a4a4a" dominant-baseline="central" transform="translate(63 25.4) rotate(-72)" text-anchor="middle">TOP</text><text x="0" y="0" font-family="Liberation Sans" font-weight="bold" font-size="10" fill="#4a4a4a" dominant-baseline="central" transform="translate(71.7 57.5) rotate(-15)" text-anchor="middle">LEFT</text><path d="M44 45 L92 33 L93.5 37.5 L46 49Z" fill="#a2a2a6"/><text x="0" y="0" font-family="Liberation Sans" font-weight="bold" font-size="21" fill="#b4b4b4" stroke="#b4b4b4" stroke-width="0.5" dominant-baseline="central" transform="translate(8 71) rotate(-62)" text-anchor="middle">N</text><text x="0" y="0" font-family="Liberation Sans" font-weight="bold" font-size="21" fill="#b4b4b4" stroke="#b4b4b4" stroke-width="0.5" dominant-baseline="central" transform="translate(116 38.5) rotate(-100)" text-anchor="middle">S</text><text x="0" y="0" font-family="Liberation Sans" font-weight="bold" font-size="22" fill="#b4b4b4" stroke="#b4b4b4" stroke-width="0.5" dominant-baseline="central" transform="translate(83 105) rotate(-150)" text-anchor="middle">W</text><rect x="40" y="126" width="47" height="17" rx="4" fill="#7e7e86"/><text x="58" y="139" font-family="Liberation Sans" font-size="11" fill="#3e3e44" text-anchor="middle">WCS</text><path d="M73 132 H81 L77 137Z" fill="#a8a8b0"/></svg>
<div class="a" style="left:1655px;top:409px;width:32px;height:211px;background:rgba(118,118,118,0.66);border-radius:4px"></div>
<svg class="a" style="left:1655px;top:409px;" width="32" height="211" viewBox="0 0 32 211"><circle cx="26" cy="6" r="3.5" fill="none" stroke="#2f2f2f"/><path d="M24.5 4.5 L27.5 7.5 M27.5 4.5 L24.5 7.5" stroke="#2f2f2f" stroke-width="0.8"/><circle cx="16" cy="30" r="9.5" fill="none" stroke="#2f2f2f" stroke-width="1.6"/><circle cx="16" cy="30" r="4.5" fill="none" stroke="#2f2f2f" stroke-width="1.4"/><path d="M7 33 C9 40 23 40 25 33" stroke="#2f2f2f" stroke-width="2.2" fill="none"/><path d="M14 48 H18 L16 51Z" fill="#2f2f2f"/><path d="M5 55 H27" stroke="#6a6a6a" stroke-width="0.8"/><path d="M8 74 C6 70 5 67 7 66 C9 65 10 68 11 70 V60 C11 58 14 58 14 60 V67 V58 C14 56 17 56 17 58 V67 V59 C17 57 20 57 20 59 V68 V62 C20 60 23 60 23 62 V74 C23 80 19 84 15 84 C11 84 9 79 8 74Z" fill="none" stroke="#2f2f2f" stroke-width="1.3"/><path d="M6 91 L20 105 M20 91 L6 105" stroke="#2f2f2f" stroke-width="1.4"/><path d="M5 90 H10 M5 90 V95 M21 90 H16 M21 90 V95 M5 106 H10 M5 106 V101" stroke="#2f2f2f" stroke-width="1.4" fill="none"/><circle cx="22" cy="108" r="5" fill="none" stroke="#2f2f2f" stroke-width="1.6"/><path d="M25.5 111.5 L29 115" stroke="#2f2f2f" stroke-width="2"/><path d="M14 121 H18 L16 124Z" fill="#2f2f2f"/><path d="M5 128 H27" stroke="#6a6a6a" stroke-width="0.8"/><path d="M16 131 V160 M11 137 L16 131 L21 137" stroke="#2f2f2f" stroke-width="1.8" fill="none"/><ellipse cx="16" cy="151" rx="12" ry="4.5" fill="none" stroke="#2f2f2f" stroke-width="1.6"/><path d="M4 151 L2 147 M4 151 L8 149" stroke="#2f2f2f" stroke-width="1.4"/><path d="M14 166 H18 L16 169Z" fill="#2f2f2f"/><path d="M5 173 H27" stroke="#6a6a6a" stroke-width="0.8"/><rect x="5" y="178" width="6" height="5" fill="none" stroke="#2f2f2f"/><rect x="13" y="178" width="6" height="5" fill="none" stroke="#2f2f2f"/><rect x="21" y="178" width="6" height="5" fill="none" stroke="#2f2f2f"/><rect x="5" y="186" width="17" height="13" fill="none" stroke="#2f2f2f" stroke-width="1.3"/><path d="M10 189 L17 192.5 L10 196Z" fill="#2f2f2f"/><circle cx="25" cy="205" r="3.5" fill="none" stroke="#2f2f2f"/></svg>
<div class="a" style="left:0px;top:142px;width:1920px;height:31px;background:#222933;"></div>
<div class="a" style="left:0px;top:169px;width:1920px;height:4px;background:#3b4453;"></div>
<svg class="a" style="left:0;top:147px" width="310" height="26" viewBox="0 0 310 26"><path d="M10 22 C18 22 18 18 20 8 C22 1 24 0 30 0 H136 C142 0 144 3 145 8 L146 22 Z" fill="#2e3541"/><path d="M146 22 C150 22 150 18 152 8 C154 1 156 0 162 0 H258 C264 0 266 3 268 8 C270 18 271 22 278 22 V26 H138 V22Z" fill="#3b4453"/><path d="M275 5 C275 3 277 2 280 2 H290 C294 2 296 4 297 8 L298 18 C298 20 296 20 294 20 H278 Z" fill="#2e3541"/></svg>
<div class="t" style="left:32px;top:152.84px;font-size:12px;color:#c8ccd2;font-weight:normal;font-style:normal;font-family:'Liberation Sans',sans-serif;">Start</div>
<div class="t" style="left:155px;top:152.84px;font-size:12px;color:#f4f4f4;font-weight:normal;font-style:normal;font-family:'Liberation Sans',sans-serif;">Test*</div>
<svg class="a" style="left:246px;top:154px;" width="9" height="9" viewBox="0 0 9 9"><path d="M1 1 L8 8 M8 1 L1 8" stroke="#d8d8d8" stroke-width="1.8"/></svg>
<svg class="a" style="left:282px;top:154px;" width="10" height="10" viewBox="0 0 10 10"><path d="M5 1 V9 M1 5 H9" stroke="#d8d8d8" stroke-width="1.8"/></svg>
<div class="a" style="left:0px;top:173px;width:152px;height:840px;background:#3b4453;"></div>
<div class="a" style="left:0;top:175px;width:128px;height:20px;background:#2c3340;border-radius:0 4px 0 0"></div>
<svg class="a" style="left:6px;top:180px;" width="3" height="12" viewBox="0 0 3 12"><rect x="0" y="0.0" width="1" height="1" fill="#bbb"/><rect x="2" y="0.0" width="1" height="1" fill="#bbb"/><rect x="0" y="2.2" width="1" height="1" fill="#bbb"/><rect x="2" y="2.2" width="1" height="1" fill="#bbb"/><rect x="0" y="4.4" width="1" height="1" fill="#bbb"/><rect x="2" y="4.4" width="1" height="1" fill="#bbb"/><rect x="0" y="6.6000000000000005" width="1" height="1" fill="#bbb"/><rect x="2" y="6.6000000000000005" width="1" height="1" fill="#bbb"/><rect x="0" y="8.8" width="1" height="1" fill="#bbb"/><rect x="2" y="8.8" width="1" height="1" fill="#bbb"/><rect x="0" y="11.0" width="1" height="1" fill="#bbb"/><rect x="2" y="11.0" width="1" height="1" fill="#bbb"/></svg>
<div class="t" style="left:15px;top:179.94px;font-size:10.7px;color:#f0f0f0;font-weight:normal;font-style:normal;font-family:'Liberation Sans',sans-serif;">PROJECT M...</div>
<div class="t" style="left:7px;top:196.27px;font-size:11.5px;color:#f0f0f0;font-weight:normal;font-style:normal;font-family:'Liberation Sans',sans-serif;">Current Project:</div>
<div class="a" style="left:6px;top:212px;width:41px;height:24px;background:#fff;border:1px solid #9aa"></div>
<div class="a" style="left:8px;top:214px;width:20px;height:20px;background:#3b4453;"></div>
<svg class="a" style="left:33px;top:220px;" width="9" height="6" viewBox="0 0 9 6"><path d="M1 1 L4.5 5 L8 1" stroke="#444" stroke-width="1.2" fill="none"/></svg>
<svg class="a" style="left:61px;top:213px;" width="20" height="20" viewBox="0 0 20 20"><rect x="4" y="0" width="12" height="5" fill="#f0f0f0"/><rect x="0" y="5" width="20" height="9" rx="2" fill="#e0e0e0"/><rect x="4" y="13" width="12" height="6" fill="#f0f0f0"/><rect x="5" y="14" width="10" height="4" fill="#62b6f0"/></svg>
<svg class="a" style="left:86px;top:213px;" width="18" height="20" viewBox="0 0 18 20"><path d="M0 0 H8 L10 2 V16 H0Z" fill="#cfcfcf"/><path d="M5 4 H12 L16 8 V20 H5Z" fill="#e0e0e0"/><path d="M7 10 H14 M7 13 H14 M7 16 H14" stroke="#888"/></svg>
<svg class="a" style="left:107px;top:221px;" width="6" height="4" viewBox="0 0 6 4"><path d="M0 0H6L3 4Z" fill="#111"/></svg>
<div class="a" style="left:61px;top:212px;width:58px;height:25px;border-right:1px solid #ccd;border-bottom:1px solid #ccd;border-radius:0 0 3px 0"></div>
<div class="a" style="left:8px;top:245px;width:111px;height:18px;background:#2c3340;"></div>
<div class="t" style="left:16px;top:247.84px;font-size:12px;color:#fff;font-weight:bold;font-style:normal;font-family:'Liberation Sans',sans-serif;">Project</div>
<svg class="a" style="left:37px;top:248px;" width="13" height="14" viewBox="0 0 13 14"><circle cx="5" cy="5" r="4" stroke="#999" stroke-width="1.3" fill="none"/><path d="M8 8 L12 12" stroke="#c89a50" stroke-width="1.5"/></svg>
<svg class="a" style="left:52px;top:248px;" width="14" height="14" viewBox="0 0 14 14"><path d="M0 5 H5 L8 2 C10 1 11 2 12 4 L13 10 C13 12 12 13 10 13 H0Z" fill="#d8d8d8"/><circle cx="11" cy="3" r="2.5" fill="#f7cc6b"/></svg>
<svg class="a" style="left:69px;top:248px;" width="14" height="14" viewBox="0 0 14 14"><path d="M0 2 H6 V12 H0Z" fill="#ccc"/><path d="M4 5 H10 L13 8 V14 H4Z" fill="#e0e0e0"/></svg>
<svg class="a" style="left:86px;top:247px;" width="14" height="14" viewBox="0 0 14 14"><path d="M2 6 C3 2 9 0 12 4" stroke="#3ccb6a" stroke-width="2" fill="none"/><path d="M12 8 C11 12 5 14 2 10" stroke="#3ccb6a" stroke-width="2" fill="none"/><path d="M10 1 L13 5 L9 5Z" fill="#3ccb6a"/><path d="M4 13 L1 9 L5 9Z" fill="#3ccb6a"/></svg>
<svg class="a" style="left:107px;top:253px;" width="5" height="3" viewBox="0 0 5 3"><path d="M0 3 L2.5 0 L5 3Z" fill="#ccc"/></svg>
<div class="a" style="left:7px;top:263px;width:113px;height:358px;border:1px solid #b5bdc8"></div>
<div class="a" style="left:13px;top:271px;width:101px;height:21px;background:#4b5568;"></div>
<div class="t" style="left:46px;top:274.84px;font-size:12px;color:#c3c9d2;font-weight:normal;font-style:normal;font-family:'Liberation Sans',sans-serif;">Search</div>
<svg class="a" style="left:96px;top:273px;" width="17" height="17" viewBox="0 0 17 17"><circle cx="6.5" cy="6.5" r="5.5" stroke="#e8e8e8" stroke-width="1.3" fill="#6e7788"/><path d="M10.5 10.5 L15 15" stroke="#e0a050" stroke-width="1.5"/></svg>
<svg class="a" style="left:38px;top:315px;" width="1" height="138" viewBox="0 0 1 138"><line x1="0.5" y1="0" x2="0.5" y2="138" stroke="#c8c8c8" stroke-dasharray="1 1" shape-rendering="crispEdges"/></svg>
<svg class="a" style="left:57px;top:353px;" width="1" height="64" viewBox="0 0 1 64"><line x1="0.5" y1="0" x2="0.5" y2="64" stroke="#c8c8c8" stroke-dasharray="1 1" shape-rendering="crispEdges"/></svg>
<svg class="a" style="left:25px;top:309px;" width="5" height="1" viewBox="0 0 5 1"><line x1="0" y1="0.5" x2="5" y2="0.5" stroke="#c8c8c8" stroke-dasharray="1 1" shape-rendering="crispEdges"/></svg>
<svg class="a" style="left:43px;top:327px;" width="6" height="1" viewBox="0 0 6 1"><line x1="0" y1="0.5" x2="6" y2="0.5" stroke="#c8c8c8" stroke-dasharray="1 1" shape-rendering="crispEdges"/></svg>
<svg class="a" style="left:43px;top:345px;" width="6" height="1" viewBox="0 0 6 1"><line x1="0" y1="0.5" x2="6" y2="0.5" stroke="#c8c8c8" stroke-dasharray="1 1" shape-rendering="crispEdges"/></svg>
<svg class="a" style="left:43px;top:435px;" width="6" height="1" viewBox="0 0 6 1"><line x1="0" y1="0.5" x2="6" y2="0.5" stroke="#c8c8c8" stroke-dasharray="1 1" shape-rendering="crispEdges"/></svg>
<svg class="a" style="left:43px;top:453px;" width="6" height="1" viewBox="0 0 6 1"><line x1="0" y1="0.5" x2="6" y2="0.5" stroke="#c8c8c8" stroke-dasharray="1 1" shape-rendering="crispEdges"/></svg>
<svg class="a" style="left:57px;top:363px;" width="11" height="1" viewBox="0 0 11 1"><line x1="0" y1="0.5" x2="11" y2="0.5" stroke="#c8c8c8" stroke-dasharray="1 1" shape-rendering="crispEdges"/></svg>
<svg class="a" style="left:57px;top:381px;" width="11" height="1" viewBox="0 0 11 1"><line x1="0" y1="0.5" x2="11" y2="0.5" stroke="#c8c8c8" stroke-dasharray="1 1" shape-rendering="crispEdges"/></svg>
<svg class="a" style="left:57px;top:399px;" width="11" height="1" viewBox="0 0 11 1"><line x1="0" y1="0.5" x2="11" y2="0.5" stroke="#c8c8c8" stroke-dasharray="1 1" shape-rendering="crispEdges"/></svg>
<svg class="a" style="left:57px;top:417px;" width="11" height="1" viewBox="0 0 11 1"><line x1="0" y1="0.5" x2="11" y2="0.5" stroke="#c8c8c8" stroke-dasharray="1 1" shape-rendering="crispEdges"/></svg>
<svg class="a" style="left:15px;top:304px;" width="10" height="10" viewBox="0 0 10 10"><rect x="0.5" y="0.5" width="9" height="9" fill="#e8e8e8" stroke="#9aa"/><path d="M2 5 H8" stroke="#3a5aa8" stroke-width="1.2"/></svg>
<svg class="a" style="left:30px;top:300px;" width="17" height="17" viewBox="0 0 17 17"><path d="M0 6 H7 L11 2 C13 0 15 1 16 4 L17 12 C17 15 15 17 12 17 H0Z" fill="#dcdcdc"/><path d="M7 6 L12 14 C13 16 16 16 16 13" stroke="#3b4453" fill="none"/></svg>
<div class="t" style="left:51px;top:302.84px;font-size:12px;color:#f0f0f0;font-weight:normal;font-style:normal;font-family:'Liberation Sans',sans-serif;">PipeSupports</div>
<svg class="a" style="left:34px;top:322px;" width="10" height="10" viewBox="0 0 10 10"><rect x="0.5" y="0.5" width="9" height="9" fill="#e8e8e8" stroke="#9aa"/><path d="M2 5 H8 M5 2 V8" stroke="#3a5aa8" stroke-width="1.2"/></svg>
<svg class="a" style="left:51px;top:319px;" width="13" height="15" viewBox="0 0 13 15"><path d="M0 0 H8 L13 5 V15 H0Z" fill="#dcdcdc"/><path d="M6 0 V15 M0 8 H13" stroke="#888"/><circle cx="6" cy="8" r="1.3" fill="#fff" stroke="#888"/></svg>
<div class="t" style="left:70px;top:320.84px;font-size:12px;color:#f0f0f0;font-weight:normal;font-style:normal;font-family:'Liberation Sans',sans-serif;">P&amp;ID Dra</div>
<svg class="a" style="left:34px;top:340px;" width="10" height="10" viewBox="0 0 10 10"><rect x="0.5" y="0.5" width="9" height="9" fill="#e8e8e8" stroke="#9aa"/><path d="M2 5 H8" stroke="#3a5aa8" stroke-width="1.2"/></svg>
<svg class="a" style="left:49px;top:337px;" width="17" height="17" viewBox="0 0 17 17"><path d="M0 0 H8 L12 4 V14 H0Z" fill="#dcdcdc"/><path d="M6 0 V14 M0 7 H12" stroke="#888"/><circle cx="11" cy="14" r="3" fill="#ccc" stroke="#666"/><circle cx="15" cy="13" r="2" fill="#ddd"/></svg>
<div class="t" style="left:70px;top:338.84px;font-size:12px;color:#f0f0f0;font-weight:normal;font-style:normal;font-family:'Liberation Sans',sans-serif;">Plant 3D I</div>
<svg class="a" style="left:69px;top:355px;" width="16" height="16" viewBox="0 0 16 16"><path d="M0 1 H10 L14 5 V16 H0Z" fill="#6cb8ec"/><path d="M10 1 V5 H14" fill="#eee"/><path d="M0 10 L14 14 V16 H0Z" fill="#f2cf4a"/><path d="M4 1 V9 M0 5 H9" stroke="#fff"/><circle cx="4" cy="5" r="1.5" fill="#6cb8ec" stroke="#fff"/></svg>
<div class="t" style="left:89px;top:356.84px;font-size:12px;color:#f0f0f0;font-weight:normal;font-style:normal;font-family:'Liberation Sans',sans-serif;">Cable</div>
<svg class="a" style="left:69px;top:373px;" width="16" height="16" viewBox="0 0 16 16"><path d="M0 1 H10 L14 5 V16 H0Z" fill="#6cb8ec"/><path d="M10 1 V5 H14" fill="#eee"/><path d="M0 10 L14 14 V16 H0Z" fill="#f2cf4a"/><path d="M4 1 V9 M0 5 H9" stroke="#fff"/><circle cx="4" cy="5" r="1.5" fill="#6cb8ec" stroke="#fff"/></svg>
<div class="t" style="left:89px;top:374.84px;font-size:12px;color:#f0f0f0;font-weight:normal;font-style:normal;font-family:'Liberation Sans',sans-serif;">Pytho</div>
<svg class="a" style="left:68px;top:391px;" width="16" height="16" viewBox="0 0 16 16"><path d="M0 1 H10 L14 5 V16 H0Z" fill="#6cb8ec"/><path d="M10 1 V5 H14" fill="#eee"/><path d="M0 10 L14 14 V16 H0Z" fill="#f2cf4a"/><path d="M4 1 V9 M0 5 H9" stroke="#fff"/><circle cx="4" cy="5" r="1.5" fill="#6cb8ec" stroke="#fff"/><rect x="8" y="10" width="8" height="6" fill="#f2c060"/><path d="M9.5 10 V8 C9.5 5.5 14.5 5.5 14.5 8 V10" stroke="#f2c060" stroke-width="1.4" fill="none"/></svg>
<div class="a" style="left:87px;top:390px;width:25px;height:19px;background:#f0f0f0;"></div>
<div class="t" style="left:89px;top:392.84px;font-size:12px;color:#000;font-weight:normal;font-style:normal;font-family:'Liberation Sans',sans-serif;">Test</div>
<svg class="a" style="left:69px;top:409px;" width="16" height="16" viewBox="0 0 16 16"><path d="M0 1 H10 L14 5 V16 H0Z" fill="#6cb8ec"/><path d="M10 1 V5 H14" fill="#eee"/><path d="M0 10 L14 14 V16 H0Z" fill="#f2cf4a"/><path d="M4 1 V9 M0 5 H9" stroke="#fff"/><circle cx="4" cy="5" r="1.5" fill="#6cb8ec" stroke="#fff"/></svg>
<div class="t" style="left:89px;top:410.84px;font-size:12px;color:#f0f0f0;font-weight:normal;font-style:normal;font-family:'Liberation Sans',sans-serif;">ValveV</div>
<svg class="a" style="left:34px;top:430px;" width="10" height="10" viewBox="0 0 10 10"><rect x="0.5" y="0.5" width="9" height="9" fill="#e8e8e8" stroke="#9aa"/><path d="M2 5 H8 M5 2 V8" stroke="#3a5aa8" stroke-width="1.2"/></svg>
<svg class="a" style="left:49px;top:427px;" width="16" height="17" viewBox="0 0 16 17"><path d="M0.5 0.5 H11 L15.5 5 V16.5 H0.5Z" fill="none" stroke="#ddd"/><path d="M3 8 L8 11 L13 8 V14 L8 11 L3 14Z" fill="#ddd"/><path d="M8 11 V5 M5 5 H11" stroke="#ddd"/></svg>
<div class="t" style="left:70px;top:428.84px;font-size:12px;color:#f0f0f0;font-weight:normal;font-style:normal;font-family:'Liberation Sans',sans-serif;">Pipe Spec</div>
<svg class="a" style="left:34px;top:448px;" width="10" height="10" viewBox="0 0 10 10"><rect x="0.5" y="0.5" width="9" height="9" fill="#e8e8e8" stroke="#9aa"/><path d="M2 5 H8 M5 2 V8" stroke="#3a5aa8" stroke-width="1.2"/></svg>
<svg class="a" style="left:49px;top:445px;" width="16" height="15" viewBox="0 0 16 15"><path d="M0 0 H11 L16 5 V15 H0Z" fill="#dcdcdc"/><path d="M11 0 V5 H16" fill="#aaa"/></svg>
<div class="t" style="left:70px;top:446.84px;font-size:12px;color:#f0f0f0;font-weight:normal;font-style:normal;font-family:'Liberation Sans',sans-serif;">Related F</div>
<div class="a" style="left:119px;top:263px;width:1px;height:358px;background:#b5bdc8;"></div>
<div class="a" style="left:120px;top:264px;width:9px;height:356px;background:#3b4453;"></div>
<div class="a" style="left:10px;top:602px;width:107px;height:15px;background:#f0f0f0;"></div>
<div class="a" style="left:25px;top:603px;width:46px;height:13px;background:#cdcdcd;"></div>
<svg class="a" style="left:13px;top:605px;" width="8" height="9" viewBox="0 0 8 9"><path d="M6 1 L2 4.5 L6 8" stroke="#555" stroke-width="1.4" fill="none"/></svg>
<svg class="a" style="left:106px;top:605px;" width="8" height="9" viewBox="0 0 8 9"><path d="M2 1 L6 4.5 L2 8" stroke="#555" stroke-width="1.4" fill="none"/></svg>
<div class="a" style="left:129px;top:197px;width:20px;height:121px;background:#3b4453;border:1px solid #4c5566;border-left:none;border-radius:0 4px 4px 0"></div>
<div class="a" style="left:129px;top:319px;width:20px;height:121px;background:#2f3643;border-radius:0 4px 4px 0"></div>
<div class="a" style="left:129px;top:441px;width:20px;height:120px;background:#2f3643;border-radius:0 4px 4px 0"></div>
<div class="t" style="left:39.5px;top:250.5px;width:200px;text-align:center;font-size:12px;color:#e8e8e8;transform:rotate(-90deg);line-height:14px">Source Files</div>
<div class="t" style="left:39.5px;top:372.0px;width:200px;text-align:center;font-size:12px;color:#e8e8e8;transform:rotate(-90deg);line-height:14px">Orthographic DWG</div>
<div class="t" style="left:39.5px;top:493.5px;width:200px;text-align:center;font-size:12px;color:#e8e8e8;transform:rotate(-90deg);line-height:14px">Isometric DWG</div>
<div class="a" style="left:7px;top:634px;width:112px;height:19px;background:#2c3340;"></div>
<div class="t" style="left:16px;top:637.84px;font-size:12px;color:#fff;font-weight:bold;font-style:normal;font-family:'Liberation Sans',sans-serif;">Details</div>
<svg class="a" style="left:52px;top:637px;" width="15" height="14" viewBox="0 0 15 14"><path d="M2 0 H9 L12 3 V12 H2Z" fill="#dcdcdc"/><rect x="0" y="8" width="15" height="4" fill="#ccc"/></svg>
<svg class="a" style="left:69px;top:637px;" width="15" height="14" viewBox="0 0 15 14"><path d="M0 0 H9 L13 4 V12 H0Z" fill="#dcdcdc"/><circle cx="7" cy="9" r="3" stroke="#777" fill="#bbb"/><path d="M9 11 L12 14" stroke="#888"/></svg>
<svg class="a" style="left:86px;top:637px;" width="15" height="15" viewBox="0 0 15 15"><path d="M0 0 H10 V12 H0Z" fill="#dcdcdc"/><path d="M2 3 H8 M2 6 H8 M2 9 H6" stroke="#777"/><circle cx="11" cy="11" r="4" fill="#ddd"/><path d="M11 9 V11 H13" stroke="#555"/></svg>
<svg class="a" style="left:107px;top:643px;" width="5" height="3" viewBox="0 0 5 3"><path d="M0 3 L2.5 0 L5 3Z" fill="#ccc"/></svg>
<div class="a" style="left:7px;top:653px;width:113px;height:339px;border:1px solid #b5bdc8;overflow:hidden"><div style="position:absolute;left:7px;top:6px;width:200px;font-size:12px;line-height:16px;color:#f0f0f0;white-space:nowrap">Status:&nbsp;File is acces<br>Name:&nbsp; Test.dwg<br>File&nbsp; location:&nbsp; C:\Us<br>DocFile_RevisonNar<br>Number:<br>File is locked by us<br>File size: 7.55MB (7,<br>File creator:&nbsp; NUC<br>Last saved: 2021. au<br>Last edited by:&nbsp; NUC<br>Description:</div></div>
<div class="a" style="left:8px;top:974px;width:111px;height:17px;background:#f0f0f0;"></div>
<div class="a" style="left:25px;top:975px;width:21px;height:15px;background:#cdcdcd;"></div>
<svg class="a" style="left:12px;top:978px;" width="8" height="9" viewBox="0 0 8 9"><path d="M6 1 L2 4.5 L6 8" stroke="#555" stroke-width="1.8" fill="none"/></svg>
<svg class="a" style="left:106px;top:978px;" width="8" height="9" viewBox="0 0 8 9"><path d="M2 1 L6 4.5 L2 8" stroke="#555" stroke-width="1.8" fill="none"/></svg>
<div class="a" style="left:0;top:990px;width:128px;height:18px;border-bottom:1px solid #2c323c;border-right:1px solid #2c323c;border-radius:0 0 6px 0"></div>
<div class="a" style="left:152px;top:925px;width:1540px;height:88px;background:#3b4453;"></div>
<div class="a" style="left:152px;top:928px;width:25px;height:83px;background:#2b313c;"></div>
<svg class="a" style="left:156px;top:931px;" width="18" height="6" viewBox="0 0 18 6"><rect x="0.0" y="0" width="1.6" height="1.6" fill="#eee"/><rect x="0.0" y="3" width="1.6" height="1.6" fill="#eee"/><rect x="2.6" y="0" width="1.6" height="1.6" fill="#eee"/><rect x="2.6" y="3" width="1.6" height="1.6" fill="#eee"/><rect x="5.2" y="0" width="1.6" height="1.6" fill="#eee"/><rect x="5.2" y="3" width="1.6" height="1.6" fill="#eee"/><rect x="7.800000000000001" y="0" width="1.6" height="1.6" fill="#eee"/><rect x="7.800000000000001" y="3" width="1.6" height="1.6" fill="#eee"/><rect x="10.4" y="0" width="1.6" height="1.6" fill="#eee"/><rect x="10.4" y="3" width="1.6" height="1.6" fill="#eee"/><rect x="13.0" y="0" width="1.6" height="1.6" fill="#eee"/><rect x="13.0" y="3" width="1.6" height="1.6" fill="#eee"/><rect x="15.600000000000001" y="0" width="1.6" height="1.6" fill="#eee"/><rect x="15.600000000000001" y="3" width="1.6" height="1.6" fill="#eee"/></svg>
<svg class="a" style="left:157px;top:942px;" width="11" height="11" viewBox="0 0 11 11"><path d="M1.5 1.5 L9.5 9.5 M9.5 1.5 L1.5 9.5" stroke="#e8e8e8" stroke-width="1.8"/></svg>
<svg class="a" style="left:156px;top:964px;" width="16" height="16" viewBox="0 0 16 16"><path d="M1 15 L9 7" stroke="#eee" stroke-width="2.2"/><path d="M8 8 C6 4 9 1 13 2 L11 4 L12 6 L14 5 L15 3 C16 7 13 10 9 9" fill="#eee"/></svg>
<div class="a" style="left:177px;top:928px;width:1513px;height:62px;background:#c8c8c8;"></div>
<div class="t" style="left:179px;top:944.84px;font-size:12px;color:#111;font-weight:normal;font-style:normal;font-family:'Liberation Mono',monospace;letter-spacing:-0.2px">Command:</div>
<div class="t" style="left:179px;top:959.84px;font-size:12px;color:#111;font-weight:normal;font-style:normal;font-family:'Liberation Mono',monospace;letter-spacing:-0.2px">Command:</div>
<div class="t" style="left:179px;top:974.84px;font-size:12px;color:#111;font-weight:normal;font-style:normal;font-family:'Liberation Mono',monospace;letter-spacing:-0.2px">Command:</div>
<div class="a" style="left:177px;top:990px;width:1513px;height:21px;background:#ffffff;"></div>
<svg class="a" style="left:181px;top:994px;" width="18" height="13" viewBox="0 0 18 13"><rect x="0.5" y="0.5" width="15" height="12" fill="#eee" stroke="#555"/><rect x="0.5" y="0.5" width="15" height="2" fill="#888"/><path d="M3 5 L6 7 L3 9 M7 10 H11" stroke="#333" fill="none"/></svg>
<svg class="a" style="left:199px;top:998px;" width="7" height="4" viewBox="0 0 7 4"><path d="M0 0H7L3.5 4Z" fill="#555"/></svg>
<div class="t" style="left:213px;top:994.84px;font-size:12px;color:#8a8a8a;font-weight:normal;font-style:italic;font-family:'Liberation Mono',monospace;letter-spacing:-0.2px">Type a command</div>
<div class="a" style="left:1691px;top:173px;width:229px;height:840px;background:#3b4453;"></div>
<div class="a" style="left:1714px;top:175px;width:206px;height:21px;background:#2c3340;border-radius:4px 0 0 0"></div>
<svg class="a" style="left:1720px;top:180px;" width="3" height="12" viewBox="0 0 3 12"><rect x="0" y="0.0" width="1" height="1" fill="#bbb"/><rect x="2" y="0.0" width="1" height="1" fill="#bbb"/><rect x="0" y="2.2" width="1" height="1" fill="#bbb"/><rect x="2" y="2.2" width="1" height="1" fill="#bbb"/><rect x="0" y="4.4" width="1" height="1" fill="#bbb"/><rect x="2" y="4.4" width="1" height="1" fill="#bbb"/><rect x="0" y="6.6000000000000005" width="1" height="1" fill="#bbb"/><rect x="2" y="6.6000000000000005" width="1" height="1" fill="#bbb"/><rect x="0" y="8.8" width="1" height="1" fill="#bbb"/><rect x="2" y="8.8" width="1" height="1" fill="#bbb"/><rect x="0" y="11.0" width="1" height="1" fill="#bbb"/><rect x="2" y="11.0" width="1" height="1" fill="#bbb"/></svg>
<div class="t" style="left:1730px;top:178.94px;font-size:10.7px;color:#f0f0f0;font-weight:normal;font-style:normal;font-family:'Liberation Sans',sans-serif;">TOOL PALETTES - AUTOCA...</div>
<div class="a" style="left:1694px;top:197px;width:20px;height:121px;background:#3b4453;border:1px solid #4c5566;border-right:none;border-radius:4px 0 0 4px"></div>
<div class="a" style="left:1694px;top:319px;width:20px;height:120px;background:#2f3643;border-radius:4px 0 0 4px"></div>
<div class="a" style="left:1694px;top:440px;width:20px;height:121px;background:#2f3643;border-radius:4px 0 0 4px"></div>
<div class="t" style="left:1605px;top:250.0px;width:200px;text-align:center;font-size:12px;color:#e8e8e8;transform:rotate(-90deg);line-height:14px">Dynamic Pipe Spec</div>
<div class="t" style="left:1605px;top:372.0px;width:200px;text-align:center;font-size:12px;color:#e8e8e8;transform:rotate(-90deg);line-height:14px">Pipe Supports Spec</div>
<div class="t" style="left:1605px;top:493.0px;width:200px;text-align:center;font-size:12px;color:#e8e8e8;transform:rotate(-90deg);line-height:14px">Instrumentation Spec</div>
<div class="a" style="left:1713px;top:196px;width:207px;height:813px;border-left:1px solid #4a5262;border-bottom:1px solid #4a5262;border-radius:0 0 0 5px;overflow:hidden"><div style="position:absolute;left:46px;top:-3px;font-size:12px;color:#e8e8e8;white-space:nowrap;line-height:14px">Bend 90°,BV (10HC01)</div></div>
<svg class="a" style="left:1733px;top:200px;" width="19" height="12" viewBox="0 0 19 12"><path d="M0 0 C1 8 6 12 11 11 C15 10 18 6 19 0Z" fill="url(#bg1)"/></svg>
<div class="a" style="left:1714px;top:196px;width:206px;height:4px;background:#3b4453;"></div>
<div class="a" style="left:1725px;top:225px;width:5px;height:1px;background:#8a919c;"></div>
<div class="t" style="left:1760px;top:235.90px;font-size:11.7px;color:#eaeaea;font-weight:normal;font-style:normal;font-family:'Liberation Sans',sans-serif;">Bend 90°,BV (10HC01)</div>
<svg class="a" style="left:1733px;top:234px;" width="16" height="14" viewBox="0 0 16 14"><path d="M2 13 C0 8 3 2 12 1" stroke="#c8c8c8" stroke-width="2.4" fill="none" stroke-linecap="round"/></svg>
<div class="a" style="left:1725px;top:268px;width:5px;height:1px;background:#8a919c;"></div>
<div class="t" style="left:1760px;top:277.90px;font-size:11.7px;color:#eaeaea;font-weight:normal;font-style:normal;font-family:'Liberation Sans',sans-serif;">Bend 90°,BV (10HC01)</div>
<svg class="a" style="left:1732px;top:273px;" width="20" height="21" viewBox="0 0 20 21"><defs><radialGradient id="bg1" cx="0.4" cy="0.4" r="0.7"><stop offset="0" stop-color="#f0f0f0"/><stop offset="1" stop-color="#888"/></radialGradient></defs><path d="M2 10 C2 3 9 0 14 1 C18 2 19 7 17 10 L10 12 C9 15 10 19 8 20 C4 20 2 16 2 10Z" fill="url(#bg1)"/><ellipse cx="13" cy="6" rx="4" ry="4.5" fill="#ddd"/></svg>
<div class="a" style="left:1725px;top:310px;width:5px;height:1px;background:#8a919c;"></div>
<div class="t" style="left:1760px;top:319.90px;font-size:11.7px;color:#eaeaea;font-weight:normal;font-style:normal;font-family:'Liberation Sans',sans-serif;">Bend 90°,BV (10HC01)</div>
<svg class="a" style="left:1733px;top:316px;" width="17" height="19" viewBox="0 0 17 19"><path d="M2 10 C2 4 8 1 12 2 C16 3 17 7 15 10 L10 11 C9 14 9 17 7 18 C3 18 2 14 2 10Z" fill="url(#bg1)"/><ellipse cx="12" cy="6" rx="3.5" ry="4" fill="#ddd"/></svg>
<div class="t" style="left:1760px;top:353.90px;font-size:11.7px;color:#eaeaea;font-weight:normal;font-style:normal;font-family:'Liberation Sans',sans-serif;">Python Miter,PL,,</div>
<div class="t" style="left:1760px;top:369.90px;font-size:11.7px;color:#eaeaea;font-weight:normal;font-style:normal;font-family:'Liberation Sans',sans-serif;">(10HC01)</div>
<svg class="a" style="left:1727px;top:354px;" width="27" height="28" viewBox="0 0 27 28"><defs><linearGradient id="bl" x1="0" y1="0" x2="1" y2="1"><stop offset="0" stop-color="#8fb0f0"/><stop offset="1" stop-color="#4a6ec8"/></linearGradient></defs><path d="M1 17 L13 9 L19 1 C21 0 23 1 23 3 L23 21 C23 25 20 26 18 24 L16 17 L6 25 C4 26 0 23 1 17Z" fill="url(#bl)"/><path d="M13 9 L16 17" stroke="#3a5cb0" stroke-width="1"/></svg>
<div class="a" style="left:1911px;top:370px;width:4px;height:218px;background:#2c323c;"></div>
<div class="a" style="left:1718px;top:398px;width:187px;height:1px;background:#2a2f38;"></div>
<div class="t" style="left:1718px;top:420.34px;font-size:12px;color:#c8ccd2;font-weight:normal;font-style:normal;font-family:'Liberation Sans',sans-serif;">Flange</div>
<div class="a" style="left:1725px;top:450px;width:5px;height:1px;background:#8a919c;"></div>
<div class="t" style="left:1760px;top:452.90px;font-size:11.7px;color:#eaeaea;font-weight:normal;font-style:normal;font-family:'Liberation Sans',sans-serif;">Flange threaded w.</div>
<div class="t" style="left:1760px;top:468.90px;font-size:11.7px;color:#eaeaea;font-weight:normal;font-style:normal;font-family:'Liberation Sans',sans-serif;">Base,FL,C,10 (10HC01)</div>
<svg class="a" style="left:1728px;top:452px;" width="26" height="27" viewBox="0 0 26 27"><defs><linearGradient id="fg452" x1="0" y1="0" x2="1" y2="1"><stop offset="0" stop-color="#d8d8dc"/><stop offset="0.55" stop-color="#9c9ca2"/><stop offset="1" stop-color="#5e5e64"/></linearGradient></defs><ellipse cx="12.5" cy="13.5" rx="11.5" ry="12.8" transform="rotate(20 12.5 13.5)" fill="url(#fg452)"/><ellipse cx="13.6" cy="13" rx="5.5" ry="7" transform="rotate(20 13.6 13)" fill="#c8c8cc"/><ellipse cx="14.6" cy="12.4" rx="4.7" ry="6.4" transform="rotate(20 14.6 12.4)" fill="#3b4453"/></svg>
<div class="a" style="left:1725px;top:492px;width:5px;height:1px;background:#8a919c;"></div>
<div class="t" style="left:1760px;top:494.90px;font-size:11.7px;color:#eaeaea;font-weight:normal;font-style:normal;font-family:'Liberation Sans',sans-serif;">Welding neck</div>
<div class="t" style="left:1760px;top:510.90px;font-size:11.7px;color:#eaeaea;font-weight:normal;font-style:normal;font-family:'Liberation Sans',sans-serif;">flange,FL,C,10 (10HC01)</div>
<svg class="a" style="left:1728px;top:494px;" width="26" height="27" viewBox="0 0 26 27"><defs><linearGradient id="fg494" x1="0" y1="0" x2="1" y2="1"><stop offset="0" stop-color="#d8d8dc"/><stop offset="0.55" stop-color="#9c9ca2"/><stop offset="1" stop-color="#5e5e64"/></linearGradient></defs><ellipse cx="12.5" cy="13.5" rx="11.5" ry="12.8" transform="rotate(20 12.5 13.5)" fill="url(#fg494)"/><ellipse cx="13.6" cy="13" rx="5.5" ry="7" transform="rotate(20 13.6 13)" fill="#c8c8cc"/><ellipse cx="14.6" cy="12.4" rx="4.7" ry="6.4" transform="rotate(20 14.6 12.4)" fill="#3b4453"/></svg>
<div class="a" style="left:1725px;top:534px;width:5px;height:1px;background:#8a919c;"></div>
<div class="t" style="left:1760px;top:536.90px;font-size:11.7px;color:#eaeaea;font-weight:normal;font-style:normal;font-family:'Liberation Sans',sans-serif;">Lapped flange,FL,C,10</div>
<div class="t" style="left:1760px;top:552.90px;font-size:11.7px;color:#eaeaea;font-weight:normal;font-style:normal;font-family:'Liberation Sans',sans-serif;">(10HC01)</div>
<svg class="a" style="left:1728px;top:536px;" width="26" height="27" viewBox="0 0 26 27"><defs><linearGradient id="fg536" x1="0" y1="0" x2="1" y2="1"><stop offset="0" stop-color="#d8d8dc"/><stop offset="0.55" stop-color="#9c9ca2"/><stop offset="1" stop-color="#5e5e64"/></linearGradient></defs><ellipse cx="12.5" cy="13.5" rx="11.5" ry="12.8" transform="rotate(20 12.5 13.5)" fill="url(#fg536)"/><ellipse cx="13.6" cy="13" rx="8" ry="9.5" transform="rotate(20 13.6 13)" fill="#c8c8cc"/><ellipse cx="14.6" cy="12.4" rx="7.2" ry="8.9" transform="rotate(20 14.6 12.4)" fill="#3b4453"/></svg>
<div class="a" style="left:1725px;top:576px;width:5px;height:1px;background:#8a919c;"></div>
<div class="t" style="left:1760px;top:578.90px;font-size:11.7px;color:#eaeaea;font-weight:normal;font-style:normal;font-family:'Liberation Sans',sans-serif;">Lapped flange,FL,C,10</div>
<div class="t" style="left:1760px;top:594.90px;font-size:11.7px;color:#eaeaea;font-weight:normal;font-style:normal;font-family:'Liberation Sans',sans-serif;">(10HC01)</div>
<svg class="a" style="left:1728px;top:578px;" width="26" height="27" viewBox="0 0 26 27"><defs><linearGradient id="fg578" x1="0" y1="0" x2="1" y2="1"><stop offset="0" stop-color="#d8d8dc"/><stop offset="0.55" stop-color="#9c9ca2"/><stop offset="1" stop-color="#5e5e64"/></linearGradient></defs><ellipse cx="12.5" cy="13.5" rx="11.5" ry="12.8" transform="rotate(20 12.5 13.5)" fill="url(#fg578)"/><ellipse cx="13.6" cy="13" rx="8" ry="9.5" transform="rotate(20 13.6 13)" fill="#c8c8cc"/><ellipse cx="14.6" cy="12.4" rx="7.2" ry="8.9" transform="rotate(20 14.6 12.4)" fill="#3b4453"/></svg>
<div class="a" style="left:1718px;top:622px;width:187px;height:1px;background:#2a2f38;"></div>
<div class="t" style="left:1718px;top:644.34px;font-size:12px;color:#c8ccd2;font-weight:normal;font-style:normal;font-family:'Liberation Sans',sans-serif;">Olet</div>
<div class="a" style="left:1725px;top:673px;width:5px;height:1px;background:#8a919c;"></div>
<div class="t" style="left:1760px;top:676.90px;font-size:11.7px;color:#eaeaea;font-weight:normal;font-style:normal;font-family:'Liberation Sans',sans-serif;">Weld-in bend,BV,16</div>
<div class="t" style="left:1760px;top:692.90px;font-size:11.7px;color:#eaeaea;font-weight:normal;font-style:normal;font-family:'Liberation Sans',sans-serif;">(10HC01)</div>
<svg class="a" style="left:1735px;top:679px;" width="16" height="20" viewBox="0 0 16 20"><path d="M1 6 C1 2 6 0 10 1 C14 2 15 6 13 9 L9 10 C8 14 8 17 5 18 C2 18 1 12 1 6Z" fill="url(#bg1)"/></svg>
<div class="a" style="left:1718px;top:720px;width:187px;height:1px;background:#2a2f38;"></div>
<div class="t" style="left:1718px;top:742.34px;font-size:12px;color:#c8ccd2;font-weight:normal;font-style:normal;font-family:'Liberation Sans',sans-serif;">Pipe</div>
<div class="t" style="left:1760px;top:782.90px;font-size:11.7px;color:#eaeaea;font-weight:normal;font-style:normal;font-family:'Liberation Sans',sans-serif;">Pipe,PL (10HC01)</div>
<svg class="a" style="left:1724px;top:776px;" width="33" height="24" viewBox="0 0 33 24"><path d="M2 3 L30 20" stroke="#111" stroke-width="5" stroke-linecap="round"/><path d="M2 3 L30 20" stroke="#e8e8e8" stroke-width="3.4" stroke-linecap="round"/><path d="M3 4 L29 19" stroke="#9a9a9a" stroke-width="0.8"/></svg>
<div class="t" style="left:1760px;top:824.90px;font-size:11.7px;color:#eaeaea;font-weight:normal;font-style:normal;font-family:'Liberation Sans',sans-serif;">Pipe,PL (10HC01)</div>
<svg class="a" style="left:1724px;top:818px;" width="33" height="24" viewBox="0 0 33 24"><path d="M2 3 L30 20" stroke="#111" stroke-width="5" stroke-linecap="round"/><path d="M2 3 L30 20" stroke="#e8e8e8" stroke-width="3.4" stroke-linecap="round"/><path d="M3 4 L29 19" stroke="#9a9a9a" stroke-width="0.8"/></svg>
<div class="a" style="left:1718px;top:860px;width:187px;height:1px;background:#2a2f38;"></div>
<div class="t" style="left:1718px;top:882.34px;font-size:12px;color:#c8ccd2;font-weight:normal;font-style:normal;font-family:'Liberation Sans',sans-serif;">Reducer</div>
<div class="a" style="left:1725px;top:912px;width:5px;height:1px;background:#8a919c;"></div>
<div class="t" style="left:1760px;top:914.90px;font-size:11.7px;color:#eaeaea;font-weight:normal;font-style:normal;font-family:'Liberation Sans',sans-serif;">Reducer conc.,BV</div>
<div class="t" style="left:1760px;top:930.90px;font-size:11.7px;color:#eaeaea;font-weight:normal;font-style:normal;font-family:'Liberation Sans',sans-serif;">(10HC01)</div>
<svg class="a" style="left:1725px;top:913px;" width="30" height="28" viewBox="0 0 30 28"><defs><linearGradient id="rg913" x1="0" y1="0" x2="0" y2="1"><stop offset="0" stop-color="#d8d8dc"/><stop offset="1" stop-color="#8a8a90"/></linearGradient></defs><path d="M4 7 C6 2 12 0 17 2 L26 9 C29 14 28 22 22 25 L12 26 C4 26 1 15 4 7Z" fill="url(#rg913)"/><ellipse cx="21" cy="17" rx="6" ry="8" fill="#bfc0c6" stroke="#eee" stroke-width="1.2"/><ellipse cx="21" cy="17" rx="4" ry="6" fill="#9a9ba2"/></svg>
<div class="a" style="left:1725px;top:954px;width:5px;height:1px;background:#8a919c;"></div>
<div class="t" style="left:1760px;top:964.40px;font-size:11.7px;color:#eaeaea;font-weight:normal;font-style:normal;font-family:'Liberation Sans',sans-serif;">Reducer ecc.,BV (10HC01)</div>
<svg class="a" style="left:1725px;top:955px;" width="30" height="28" viewBox="0 0 30 28"><defs><linearGradient id="rg955" x1="0" y1="0" x2="0" y2="1"><stop offset="0" stop-color="#d8d8dc"/><stop offset="1" stop-color="#8a8a90"/></linearGradient></defs><path d="M4 7 C6 2 12 0 17 2 L26 9 C29 14 28 22 22 25 L12 26 C4 26 1 15 4 7Z" fill="url(#rg955)"/><ellipse cx="21" cy="17" rx="6" ry="8" fill="#bfc0c6" stroke="#eee" stroke-width="1.2"/><ellipse cx="21" cy="17" rx="4" ry="6" fill="#9a9ba2"/></svg>
<div class="a" style="left:1718px;top:1000px;width:187px;height:1px;background:#2a2f38;"></div>
<div class="a" style="left:0px;top:1011px;width:1920px;height:29px;background:#222933;"></div>
<div class="a" style="left:1216px;top:1013px;width:47px;height:24px;background:#3b4453;"></div>
<div class="a" style="left:1267px;top:1013px;width:62px;height:24px;background:#3b4453;"></div>
<div class="a" style="left:1333px;top:1013px;width:125px;height:24px;background:#3b4453;"></div>
<div class="a" style="left:1460px;top:1013px;width:62px;height:24px;background:#3b4453;"></div>
<div class="a" style="left:1525px;top:1013px;width:24px;height:24px;background:#3b4453;"></div>
<div class="a" style="left:1552px;top:1013px;width:23px;height:24px;background:#3b4453;"></div>
<div class="a" style="left:1578px;top:1013px;width:106px;height:24px;background:#3b4453;"></div>
<div class="a" style="left:1686px;top:1013px;width:39px;height:24px;background:#3b4453;"></div>
<div class="a" style="left:1727px;top:1013px;width:24px;height:24px;background:#3b4453;"></div>
<div class="a" style="left:1753px;top:1013px;width:24px;height:24px;background:#3b4453;"></div>
<div class="a" style="left:1780px;top:1013px;width:86px;height:24px;background:#3b4453;"></div>
<div class="a" style="left:1870px;top:1013px;width:46px;height:24px;background:#3b4453;"></div>
<div class="t" style="left:1219px;top:1019.84px;font-size:12px;color:#eef0f3;font-weight:normal;font-style:normal;font-family:'Liberation Sans',sans-serif;">MODEL</div>
<div class="a" style="left:1267px;top:1014px;width:22px;height:22px;background:#5b8bc4;"></div>
<div class="a" style="left:1333px;top:1014px;width:22px;height:22px;background:#5b8bc4;"></div>
<div class="a" style="left:1358px;top:1014px;width:22px;height:22px;background:#5b8bc4;"></div>
<div class="a" style="left:1461px;top:1014px;width:22px;height:22px;background:#5b8bc4;"></div>
<div class="a" style="left:1485px;top:1014px;width:22px;height:22px;background:#5b8bc4;"></div>
<div class="a" style="left:1552px;top:1014px;width:22px;height:22px;background:#5b8bc4;"></div>
<div class="a" style="left:1579px;top:1014px;width:22px;height:22px;background:#5b8bc4;"></div>
<svg class="a" style="left:1270px;top:1017px;" width="16" height="16" viewBox="0 0 16 16"><path d="M4 1V15M8 1V15M12 1V15M1 4H15M1 8H15M1 12H15" stroke="#fff" stroke-width="1.3"/></svg>
<svg class="a" style="left:1294px;top:1018px;" width="14" height="14" viewBox="0 0 14 14"><rect x="0" y="0" width="2.2" height="2.2" fill="#e8e8e8"/><rect x="0" y="5" width="2.2" height="2.2" fill="#e8e8e8"/><rect x="0" y="10" width="2.2" height="2.2" fill="#e8e8e8"/><rect x="5" y="0" width="2.2" height="2.2" fill="#e8e8e8"/><rect x="5" y="5" width="2.2" height="2.2" fill="#e8e8e8"/><rect x="5" y="10" width="2.2" height="2.2" fill="#e8e8e8"/><rect x="10" y="0" width="2.2" height="2.2" fill="#e8e8e8"/><rect x="10" y="5" width="2.2" height="2.2" fill="#e8e8e8"/><rect x="10" y="10" width="2.2" height="2.2" fill="#e8e8e8"/></svg>
<svg class="a" style="left:1317px;top:1023px;" width="8" height="5" viewBox="0 0 8 5"><path d="M0 0H8L4 5Z" fill="#dcdcdc"/></svg>
<svg class="a" style="left:1336px;top:1017px;" width="16" height="16" viewBox="0 0 16 16"><path d="M4 1V7M1 4H7" stroke="#fff" stroke-width="1.4"/><rect x="5" y="9" width="10" height="4" fill="#fff"/></svg>
<svg class="a" style="left:1361px;top:1017px;" width="16" height="16" viewBox="0 0 16 16"><path d="M2 1V14H15M2 11H5V14" stroke="#fff" stroke-width="1.3" fill="none"/></svg>
<svg class="a" style="left:1385px;top:1017px;" width="17" height="16" viewBox="0 0 17 16"><circle cx="7" cy="9" r="6" stroke="#ddd" stroke-width="1.3" fill="none"/><path d="M7 9 L13 2 M7 9 H16" stroke="#ddd" stroke-width="1.2"/></svg>
<svg class="a" style="left:1409px;top:1023px;" width="8" height="5" viewBox="0 0 8 5"><path d="M0 0H8L4 5Z" fill="#dcdcdc"/></svg>
<svg class="a" style="left:1424px;top:1016px;" width="16" height="17" viewBox="0 0 16 17"><path d="M8 0 V17" stroke="#3ccb6a" stroke-width="1.2"/><path d="M1 2 L15 15" stroke="#e33" stroke-width="1.2"/><rect x="6" y="7" width="4" height="4" fill="none" stroke="#fff"/></svg>
<svg class="a" style="left:1447px;top:1023px;" width="8" height="5" viewBox="0 0 8 5"><path d="M0 0H8L4 5Z" fill="#dcdcdc"/></svg>
<svg class="a" style="left:1464px;top:1017px;" width="16" height="16" viewBox="0 0 16 16"><path d="M1 14 L13 3 M1 14 H15" stroke="#fff" stroke-width="1.3"/><rect x="6" y="7" width="3" height="3" fill="#fff"/></svg>
<svg class="a" style="left:1488px;top:1016px;" width="16" height="17" viewBox="0 0 16 17"><rect x="1" y="1" width="5" height="5" fill="none" stroke="#fff"/><path d="M6 4 H15 V16 H3 V6" stroke="#fff" stroke-width="1.3" fill="none"/></svg>
<svg class="a" style="left:1512px;top:1023px;" width="8" height="5" viewBox="0 0 8 5"><path d="M0 0H8L4 5Z" fill="#dcdcdc"/></svg>
<svg class="a" style="left:1528px;top:1017px;" width="17" height="15" viewBox="0 0 17 15"><rect x="0" y="1" width="17" height="2.5" fill="#eee"/><rect x="0" y="5.5" width="12" height="2.5" fill="#eee"/><rect x="0" y="10" width="15" height="2.5" fill="#eee"/></svg>
<svg class="a" style="left:1555px;top:1016px;" width="17" height="17" viewBox="0 0 17 17"><path d="M3 1 V15 H16 M3 1 L1 4 M3 1 L5 4 M16 15 L13 13 M16 15 L13 17" stroke="#fff" stroke-width="1.3" fill="none"/><path d="M10 3 L7 8 H10 L8 12" stroke="#fff" stroke-width="1.2" fill="none"/></svg>
<svg class="a" style="left:1582px;top:1016px;" width="17" height="17" viewBox="0 0 17 17"><path d="M7 1 L11 10 L14 16 L7 12 L0 16 L3 10Z" fill="#fff"/><circle cx="13" cy="4" r="2.5" stroke="#fff" fill="none"/></svg>
<svg class="a" style="left:1606px;top:1016px;" width="17" height="17" viewBox="0 0 17 17"><path d="M7 1 L11 10 L14 16 L7 12 L0 16 L3 10Z" fill="#c8c8c8"/><path d="M12 1 L10 5 H13 L11 9" stroke="#ddd" fill="none"/></svg>
<svg class="a" style="left:1630px;top:1016px;" width="16" height="17" viewBox="0 0 16 17"><path d="M8 1 L12 10 L15 16 L8 12 L1 16 L4 10Z" fill="#c8c8c8"/></svg>
<div class="t" style="left:1655px;top:1019.84px;font-size:12px;color:#e6e6e6;font-weight:normal;font-style:normal;font-family:'Liberation Sans',sans-serif;">1:1</div>
<svg class="a" style="left:1673px;top:1023px;" width="8" height="5" viewBox="0 0 8 5"><path d="M0 0H8L4 5Z" fill="#dcdcdc"/></svg>
<svg class="a" style="left:1689px;top:1016px;" width="17" height="17" viewBox="0 0 17 17"><circle cx="8.5" cy="8.5" r="5.5" fill="none" stroke="#d0d0d0" stroke-width="3.5"/><path d="M8.5 0V3M8.5 14V17M0 8.5H3M14 8.5H17M2.5 2.5L4.5 4.5M12.5 12.5L14.5 14.5M2.5 14.5L4.5 12.5M12.5 4.5L14.5 2.5" stroke="#d0d0d0" stroke-width="2.5"/></svg>
<svg class="a" style="left:1714px;top:1023px;" width="8" height="5" viewBox="0 0 8 5"><path d="M0 0H8L4 5Z" fill="#dcdcdc"/></svg>
<svg class="a" style="left:1730px;top:1017px;" width="16" height="16" viewBox="0 0 16 16"><path d="M8 1V15M1 8H15" stroke="#eee" stroke-width="1.6"/></svg>
<svg class="a" style="left:1756px;top:1016px;" width="17" height="17" viewBox="0 0 17 17"><rect x="1" y="1" width="6" height="6" fill="none" stroke="#ddd"/><circle cx="13" cy="6" r="3.5" fill="none" stroke="#ddd"/><path d="M6 10 L9 16 H3Z" fill="none" stroke="#ddd"/></svg>
<svg class="a" style="left:1782px;top:1016px;" width="17" height="17" viewBox="0 0 17 17"><path d="M8.5 1 L16.5 16 H0.5Z" fill="#f0a070"/><rect x="7.7" y="6" width="1.6" height="5" fill="#3b4453"/><rect x="7.7" y="12.5" width="1.6" height="1.6" fill="#3b4453"/></svg>
<svg class="a" style="left:1802px;top:1016px;" width="17" height="17" viewBox="0 0 17 17"><rect x="0" y="3" width="14" height="10" fill="#3a70b8"/><path d="M3 0 V8 M0 5 H10" stroke="#fff"/><rect x="0" y="10" width="6" height="5" fill="#f2c030"/><path d="M7 12 L10 15 L16 8" stroke="#3ccb6a" stroke-width="2" fill="none"/></svg>
<svg class="a" style="left:1825px;top:1016px;" width="17" height="17" viewBox="0 0 17 17"><rect x="0.5" y="0.5" width="13" height="11" fill="#eee" stroke="#bbb"/><path d="M1 9 L5 3 L9 8 L13 4" stroke="#333" fill="none"/><path d="M12 8 L17 17 H7Z" fill="#f07030"/></svg>
<svg class="a" style="left:1847px;top:1016px;" width="16" height="17" viewBox="0 0 16 17"><path d="M1 1 H10 L15 6 V16 H1Z" fill="none" stroke="#4db2ec" stroke-width="1.3"/><path d="M4 9 L8 11 L12 9 V14 L8 11 L4 14Z" fill="none" stroke="#4db2ec"/><path d="M8 11 V6 M6 6 H10" stroke="#4db2ec"/></svg>
<svg class="a" style="left:1874px;top:1018px;" width="17" height="13" viewBox="0 0 17 13"><rect x="0.5" y="0.5" width="16" height="12" fill="none" stroke="#ddd"/><path d="M4 9 L7 6 M4 9 V7 M4 9 H6 M13 3 L10 6 M13 3 V5 M13 3 H11" stroke="#ddd"/></svg>
<svg class="a" style="left:1898px;top:1017px;" width="16" height="15" viewBox="0 0 16 15"><rect x="0" y="1" width="16" height="2" fill="#eee"/><rect x="0" y="6.5" width="16" height="2" fill="#eee"/><rect x="0" y="12" width="16" height="2" fill="#eee"/></svg>
<div class="a" style="left:0px;top:1040px;width:1920px;height:40px;background:#171717;"></div>
<div class="a" style="left:197px;top:1040px;width:48px;height:40px;background:#3d3d3d;"></div>
<div class="a" style="left:151px;top:1078px;width:41px;height:2px;background:#f1a8a8;"></div>
<div class="a" style="left:197px;top:1078px;width:48px;height:2px;background:#f1a8a8;"></div>
<div class="a" style="left:250px;top:1078px;width:40px;height:2px;background:#f1a8a8;"></div>
<div class="a" style="left:299px;top:1078px;width:40px;height:2px;background:#f1a8a8;"></div>
<div class="a" style="left:348px;top:1078px;width:40px;height:2px;background:#f1a8a8;"></div>
<div class="a" style="left:397px;top:1078px;width:40px;height:2px;background:#f1a8a8;"></div>
<div class="a" style="left:446px;top:1078px;width:40px;height:2px;background:#f1a8a8;"></div>
<div class="a" style="left:495px;top:1078px;width:40px;height:2px;background:#f1a8a8;"></div>
<svg class="a" style="left:16px;top:1052px;" width="17" height="17" viewBox="0 0 17 17"><path d="M0 2.5 L7 1.5 V8 H0Z M8 1.3 L17 0 V8 H8Z M0 9 H7 V15.5 L0 14.5Z M8 9 H17 V17 L8 15.7Z" fill="#fff"/></svg>
<svg class="a" style="left:63px;top:1052px;" width="17" height="17" viewBox="0 0 17 17"><rect x="1" y="3" width="11" height="11" fill="none" stroke="#fff" stroke-width="1.2"/><path d="M0 1 H13 M0 16 H13" stroke="#fff" stroke-width="1.2"/><path d="M15 1 V3 M15 5 V16" stroke="#fff" stroke-width="1.5"/></svg>
<svg class="a" style="left:112px;top:1051px;" width="22" height="18" viewBox="0 0 22 18"><path d="M0 2 C0 1 1 0 2 0 H8 L10 2 H20 C21 2 22 3 22 4 V16 C22 17 21 18 20 18 H2 C1 18 0 17 0 16Z" fill="#f0c040"/><rect x="0" y="4" width="22" height="14" rx="1" fill="#f8d868"/><path d="M5 18 V10 H17 V18 H13 V14 H9 V18Z" fill="#2a8ad8"/></svg>
<svg class="a" style="left:160px;top:1050px;" width="23" height="24" viewBox="0 0 23 24"><rect x="0.5" y="0.5" width="22" height="23" rx="2" fill="#2a52d8" stroke="#555"/><rect x="6" y="0.5" width="11" height="7" fill="#ddd"/><rect x="12" y="1.5" width="3" height="5" fill="#2a52d8"/><rect x="3" y="10" width="17" height="13" fill="#fff"/><path d="M4 13 H19 M4 16 H19 M4 19 H19" stroke="#e36"/></svg>
<svg class="a" style="left:209px;top:1050px;" width="24" height="24" viewBox="0 0 24 24"><rect width="24" height="24" fill="#f8e4dc"/><path d="M4 21 L10 4 H14 L20 21 H16 L12 9 L8 21Z" fill="#c0202a"/><path d="M8 15 H16 V17 H8Z" fill="#c0202a"/><text x="20" y="22" font-family="Liberation Sans" font-size="4" font-weight="bold" text-anchor="middle" fill="#c0202a">P3D</text></svg>
<svg class="a" style="left:258px;top:1050px;" width="24" height="24" viewBox="0 0 24 24"><rect width="24" height="24" fill="#f8e4dc"/><path d="M4 21 L10 4 H14 L20 21 H16 L12 9 L8 21Z" fill="#c0202a"/><path d="M8 15 H16 V17 H8Z" fill="#c0202a"/><text x="20" y="22" font-family="Liberation Sans" font-size="4" font-weight="bold" text-anchor="middle" fill="#c0202a">SC</text></svg>
<svg class="a" style="left:306px;top:1050px;" width="24" height="24" viewBox="0 0 24 24"><path d="M0 3 L14 0 V24 L0 21Z" fill="#0a64c8"/><ellipse cx="7" cy="12" rx="4" ry="4.5" fill="none" stroke="#fff" stroke-width="2"/><rect x="13" y="7" width="11" height="10" fill="#2a8ae0"/><path d="M13 7 L18.5 12 L24 7" stroke="#fff" stroke-width="1.5" fill="none"/></svg>
<svg class="a" style="left:356px;top:1049px;" width="25" height="25" viewBox="0 0 25 25"><circle cx="11" cy="11" r="10" fill="#db3a2e"/><path d="M11 11 L20 6 A10 10 0 0 1 11 21Z" fill="#f4c20d"/><path d="M11 11 L11 21 A10 10 0 0 1 2 6Z" fill="#3aa757"/><circle cx="11" cy="11" r="4.5" fill="#4a89f3" stroke="#fff" stroke-width="1.5"/><circle cx="18" cy="18" r="6.5" fill="#1a8a78"/><text x="18" y="21.5" font-family="Liberation Sans" font-size="9" font-weight="bold" text-anchor="middle" fill="#fff">T</text></svg>
<svg class="a" style="left:405px;top:1049px;" width="24" height="24" viewBox="0 0 24 24"><rect x="8" y="2" width="16" height="20" fill="#fff"/><path d="M10 6 H22 M10 10 H22 M10 14 H22 M10 18 H22 M15 2 V22 M19 2 V22" stroke="#1d6f42" stroke-width="1.3"/><path d="M0 3 L14 0 V24 L0 21Z" fill="#1d6f42"/><path d="M3 7 L10 17 M10 7 L3 17" stroke="#fff" stroke-width="2"/></svg>
<svg class="a" style="left:455px;top:1050px;" width="22" height="22" viewBox="0 0 22 22"><circle cx="11" cy="11" r="11" fill="#1a9ee8"/><text x="11" y="16.5" font-family="Liberation Sans" font-size="15" font-weight="bold" text-anchor="middle" fill="#fff">S</text></svg>
<svg class="a" style="left:504px;top:1050px;" width="20" height="20" viewBox="0 0 20 20"><circle cx="10" cy="10" r="6" fill="none" stroke="#fff" stroke-width="3.5"/><path d="M10 0V4M10 16V20M0 10H4M16 10H20M3 3L5.5 5.5M14.5 14.5L17 17M3 17L5.5 14.5M14.5 5.5L17 3" stroke="#fff" stroke-width="3"/></svg>
<svg class="a" style="left:1673px;top:1055px;" width="14" height="9" viewBox="0 0 14 9"><path d="M1 8 L7 2 L13 8" stroke="#fff" stroke-width="1.4" fill="none"/></svg>
<svg class="a" style="left:1703px;top:1052px;" width="18" height="16" viewBox="0 0 18 16"><path d="M1 5 H4 L8 1 V15 L4 11 H1Z" fill="none" stroke="#fff" stroke-width="1.2"/><path d="M11 5 C12.5 6.5 12.5 9.5 11 11 M13.5 3 C16 5.5 16 10.5 13.5 13 M16 1 C19.5 4.5 19.5 11.5 16 15" stroke="#fff" stroke-width="1.2" fill="none"/></svg>
<svg class="a" style="left:1736px;top:1051px;" width="18" height="17" viewBox="0 0 18 17"><path d="M2 15 C2 8 8 2 15 2 M5 15 C5 10 10 5 15 5 M8 15 C8 11 11 8 15 8 M11 15 C11 13 13 11 15 11" stroke="#fff" stroke-width="1.3" fill="none"/><circle cx="15" cy="15" r="1.8" fill="#fff"/></svg>
<svg class="a" style="left:1767px;top:1052px;" width="18" height="16" viewBox="0 0 18 16"><path d="M4.5 0 L9 3 L4.5 6 L0 3Z M13.5 0 L18 3 L13.5 6 L9 3Z M4.5 6 L9 9 L4.5 12 L0 9Z M13.5 6 L18 9 L13.5 12 L9 9Z M9 10 L13 13 L9 16 L5 13Z" fill="#fff"/></svg>
<div class="t" style="left:1679px;width:300px;text-align:center;top:1044.84px;font-size:12px;color:#fff;font-weight:normal;">13:35</div>
<div class="t" style="left:1679px;width:300px;text-align:center;top:1062.84px;font-size:12px;color:#fff;font-weight:normal;">2021. 08. 27.</div>
<svg class="a" style="left:1876px;top:1050px;" width="32" height="28" viewBox="0 0 32 28"><path d="M1 1 H19 V13 H7 L3 17 V13 H1Z" fill="#fff"/><path d="M4 5 H16 M4 9 H14" stroke="#171717" stroke-width="1.2"/><circle cx="23" cy="19" r="7" fill="#171717" stroke="#ccc" stroke-width="1.2"/><text x="23" y="23" font-family="Liberation Sans" font-size="11" text-anchor="middle" fill="#fff">3</text></svg>
<div class="a" style="left:1918px;top:1040px;width:2px;height:40px;background:#555;"></div>
</body></html>
